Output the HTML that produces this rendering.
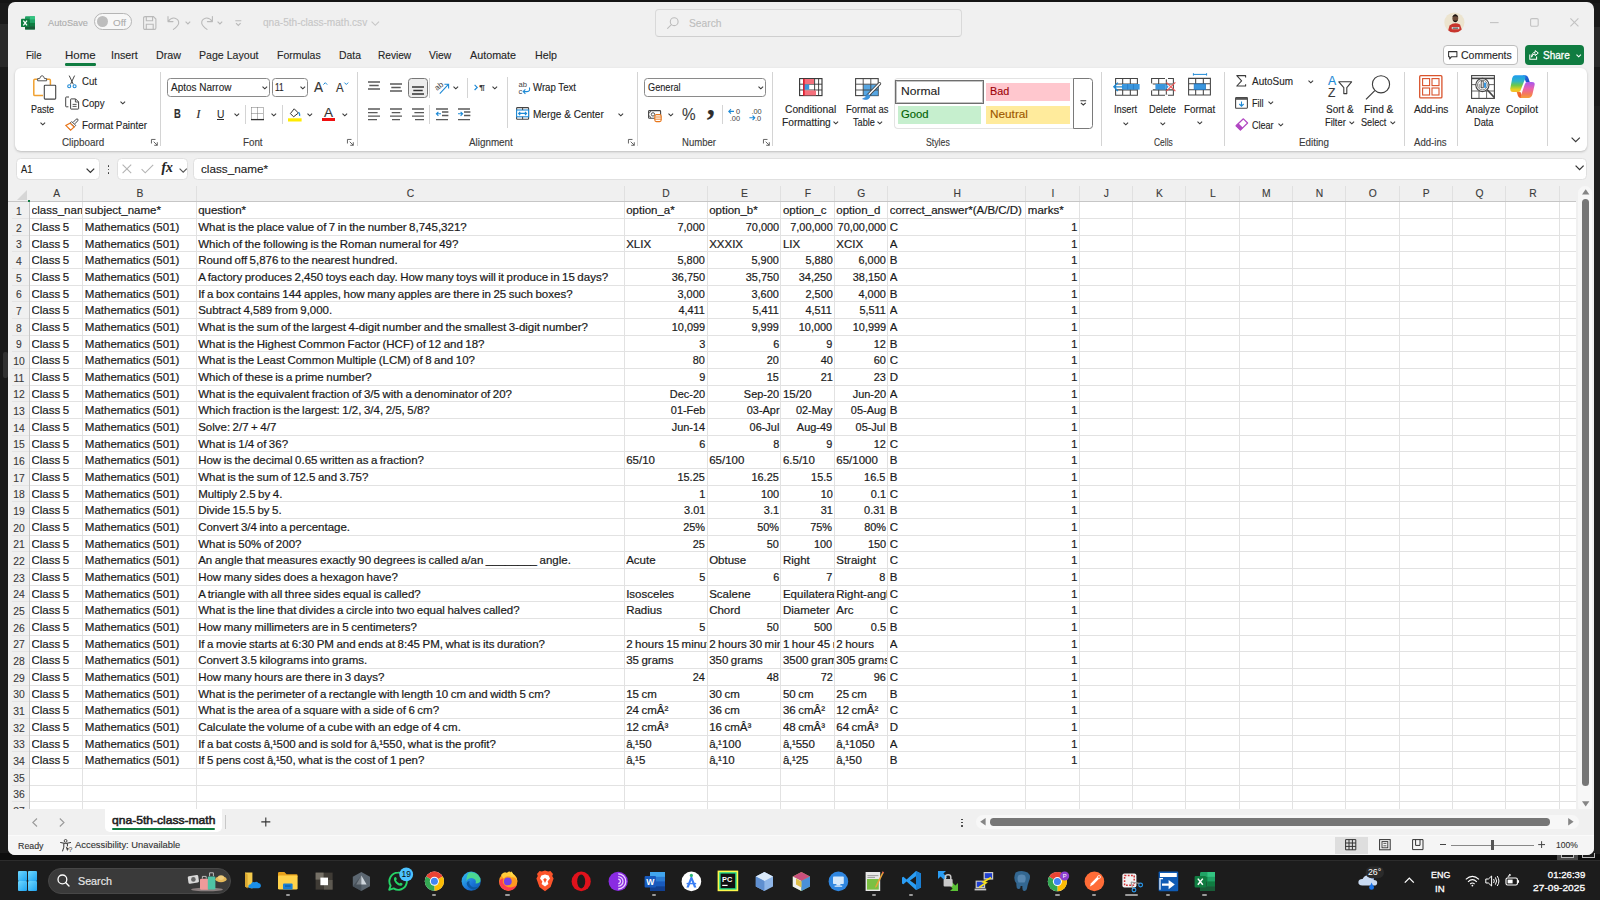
<!DOCTYPE html>
<html lang="en"><head><meta charset="utf-8"><title>qna-5th-class-math.csv - Excel</title>
<style>
html,body{margin:0;padding:0;}
body{width:1600px;height:900px;overflow:hidden;background:#1f1f1f;position:relative;font-family:"Liberation Sans",sans-serif;}
.a{position:absolute;box-sizing:border-box;}
.t{position:absolute;white-space:nowrap;font-family:"Liberation Sans",sans-serif;-webkit-text-stroke:0.12px;}
svg{overflow:visible;}
.c{position:absolute;height:15px;line-height:15px;font-size:11.5px;color:#1a1a1a;white-space:nowrap;overflow:hidden;word-spacing:-0.7px;-webkit-text-stroke:0.2px #1a1a1a;}

</style></head><body>
<div class="a" style="left:0.00px;top:0.00px;width:1600.00px;height:900.00px;background:#1a1a1a;"></div>
<div class="a" style="left:0.00px;top:0.00px;width:1600.00px;height:3.00px;background:#151515;"></div>
<div class="a" style="left:0.00px;top:853.00px;width:1600.00px;height:8.00px;background:#0e0e0e;"></div>
<div class="a" style="left:0.00px;top:23.50px;width:8.00px;height:43.50px;background:#292929;"></div>
<div class="a" style="left:2.50px;top:352.00px;width:5.00px;height:26.00px;background:#323232;border-radius:2px;"></div>
<div class="a" style="left:1594.00px;top:27.00px;width:6.00px;height:40.00px;background:#292929;"></div>
<div class="a" style="left:1594.00px;top:106.00px;width:6.00px;height:748.00px;background:#1f1f1f;"></div>
<div class="a" style="left:1557.00px;top:853.00px;width:21.00px;height:8.00px;background:#4a4a4a;"></div>
<div class="a" style="left:1561.00px;top:853.00px;width:13.00px;height:5.00px;background:#1b1b1b;border:1px solid #bbb;border-top:none;"></div>
<div class="a" style="left:1582.00px;top:853.00px;width:13.00px;height:4.50px;background:#1b1b1b;border:1px solid #bbb;border-top:none;"></div>
<div class="a" style="left:7.70px;top:2.20px;width:1586.80px;height:852.50px;background:#f0f0f0;border-radius:7px;"></div>
<svg class="a" style="left:21.00px;top:15.50px;" width="14.5" height="14" viewBox="0 0 14.5 14" fill="none">
<rect x="4" y="0.3" width="10" height="13.2" rx="1" fill="#21a366"/>
<rect x="9" y="0.3" width="5" height="3.4" fill="#33c481"/>
<rect x="4" y="3.6" width="5" height="3.3" fill="#107c41"/>
<rect x="9" y="3.6" width="5" height="3.3" fill="#21a366"/>
<rect x="4" y="6.9" width="5" height="3.3" fill="#185c37"/>
<rect x="9" y="6.9" width="5" height="3.3" fill="#107c41"/>
<rect x="4" y="10.2" width="10" height="3.3" fill="#185c37"/>
<rect x="0" y="2.8" width="8.3" height="8.3" rx="0.9" fill="#107c41"/>
<path d="M2.3 4.6L6 9.4M6 4.6L2.3 9.4" stroke="#fff" stroke-width="1.25"/>
</svg>
<div class="t " style="left:48.20px;top:16.00px;font-size:9.4px;line-height:13px;color:#adadad;transform:scaleX(0.9813);transform-origin:left center;">AutoSave</div>
<div class="a" style="left:94.00px;top:13.40px;width:37.60px;height:16.20px;background:#f7f7f7;border:1px solid #b5b5b5;border-radius:9px;"></div>
<div class="a" style="left:97.00px;top:16.00px;width:11.40px;height:11.40px;background:#bdbdbd;border-radius:50%;"></div>
<div class="t " style="left:113.00px;top:16.00px;font-size:9.4px;line-height:13px;color:#adadad;transform:scaleX(1.0514);transform-origin:left center;">Off</div>
<svg class="a" style="left:143.00px;top:15.50px;" width="13.5" height="14" viewBox="0 0 13.5 14" fill="none"><path d="M0.6 2.1Q0.6 0.6 2.1 0.6H10.4L12.9 3.1V11.9Q12.9 13.4 11.4 13.4H2.1Q0.6 13.4 0.6 11.9Z" stroke="#b9b9b9" stroke-width="1.1"/><path d="M3.3 0.8V4.8H9.6V0.8M3.3 13.2V8.3H10.2V13.2" stroke="#b9b9b9" stroke-width="1.1"/></svg>
<svg class="a" style="left:167.00px;top:16.00px;" width="14" height="14" viewBox="0 0 14 14" fill="none"><path d="M1 0.6V5.6H6M1.2 5.4Q4 1.4 8 2.2Q12.3 3.4 11.6 7.6Q11 10 6.4 13.4" stroke="#b9b9b9" stroke-width="1.1" stroke-linecap="round" stroke-linejoin="round"/></svg>
<svg class="a" style="left:185.00px;top:20.50px;" width="6" height="4" viewBox="0 0 6 4" fill="none"><path d="M0.6 0.6L2.9 2.9L5.2 0.6" stroke="#b9b9b9" stroke-width="1.1"/></svg>
<svg class="a" style="left:199.50px;top:16.00px;" width="14" height="14" viewBox="0 0 14 14" fill="none"><path d="M12.4 0.6V5.6H7.4M12.2 5.4Q9.4 1.4 5.4 2.2Q1.1 3.4 1.8 7.6Q2.4 10 7 13.4" stroke="#b9b9b9" stroke-width="1.1" stroke-linecap="round" stroke-linejoin="round"/></svg>
<svg class="a" style="left:217.00px;top:20.50px;" width="6" height="4" viewBox="0 0 6 4" fill="none"><path d="M0.6 0.6L2.9 2.9L5.2 0.6" stroke="#b9b9b9" stroke-width="1.1"/></svg>
<svg class="a" style="left:234.50px;top:19.50px;" width="7" height="6" viewBox="0 0 7 6" fill="none"><path d="M0.3 0.7H6.3M1 3.2L3.3 5.4L5.6 3.2" stroke="#b9b9b9" stroke-width="1.1"/></svg>
<div class="t " style="left:262.80px;top:16.00px;font-size:10.3px;line-height:13px;color:#c6c6c6;transform:scaleX(0.9787);transform-origin:left center;">qna-5th-class-math.csv</div>
<svg class="a" style="left:371.00px;top:20.50px;" width="9" height="6" viewBox="0 0 9 6" fill="none"><path d="M0.6 0.6L4.3 4.3L8 0.6" stroke="#c6c6c6" stroke-width="1.1"/></svg>
<div class="a" style="left:654.60px;top:8.60px;width:307.00px;height:28.00px;background:#f1f1f1;border:1px solid #d9d9d9;border-bottom-color:#cfcfcf;border-radius:4px;"></div>
<svg class="a" style="left:666.50px;top:16.50px;" width="12" height="12" viewBox="0 0 12 12" fill="none"><circle cx="7.2" cy="4.7" r="3.9" stroke="#bdbdbd" stroke-width="1.1"/><path d="M4.4 7.6L0.6 11.4" stroke="#bdbdbd" stroke-width="1.1" stroke-linecap="round"/></svg>
<div class="t " style="left:689.40px;top:17.00px;font-size:10.4px;line-height:13px;color:#bdbdbd;transform:scaleX(0.9863);transform-origin:left center;">Search</div>
<svg class="a" style="left:1444.00px;top:12.00px;" width="21" height="21" viewBox="0 0 21 21" fill="none"><defs><clipPath id="av"><circle cx="10.4" cy="10.5" r="10.1"/></clipPath></defs>
<g clip-path="url(#av)"><rect width="21" height="21" fill="#ece4cf"/>
<path d="M3.5 21L5.5 13.5Q10.5 9.5 16 12.5L19 21Z" fill="#c8352e"/>
<ellipse cx="11.3" cy="6.3" rx="2.9" ry="3.8" fill="#6b4a38"/>
<path d="M8.2 5.2Q11.3 -0.5 14.4 5.2Q11.3 3.2 8.2 5.2Z" fill="#1d1714"/>
<path d="M8.8 8Q11.3 12.4 13.8 8Q11.3 9.6 8.8 8Z" fill="#1d1714"/>
<rect x="7.8" y="15" width="7.5" height="2.2" fill="#e9e9e9"/><rect x="8.6" y="15.6" width="5.6" height="1" fill="#333"/></g></svg>
<svg class="a" style="left:1489.60px;top:21.80px;" width="9" height="2" viewBox="0 0 9 2" fill="none"><path d="M0 0.6H8.6" stroke="#c2c2c2" stroke-width="1.1"/></svg>
<svg class="a" style="left:1529.80px;top:18.30px;" width="9" height="9" viewBox="0 0 9 9" fill="none"><rect x="0.6" y="0.6" width="7.6" height="7.6" rx="1.2" stroke="#c2c2c2" stroke-width="1.1"/></svg>
<svg class="a" style="left:1569.80px;top:18.30px;" width="9" height="9" viewBox="0 0 9 9" fill="none"><path d="M0.4 0.4L8.4 8.4M8.4 0.4L0.4 8.4" stroke="#c2c2c2" stroke-width="1.1"/></svg>
<div class="t " style="left:26.30px;top:48.00px;font-size:11.1px;line-height:14px;color:#262626;transform:scaleX(0.8667);transform-origin:left center;">File</div>
<div class="t " style="left:64.60px;top:48.00px;font-size:11.1px;line-height:14px;color:#262626;transform:scaleX(1.0335);transform-origin:left center;">Home</div>
<div class="t " style="left:111.40px;top:48.00px;font-size:11.1px;line-height:14px;color:#262626;transform:scaleX(0.9655);transform-origin:left center;">Insert</div>
<div class="t " style="left:156.00px;top:48.00px;font-size:11.1px;line-height:14px;color:#262626;transform:scaleX(0.9652);transform-origin:left center;">Draw</div>
<div class="t " style="left:199.00px;top:48.00px;font-size:11.1px;line-height:14px;color:#262626;transform:scaleX(0.9546);transform-origin:left center;">Page Layout</div>
<div class="t " style="left:277.00px;top:48.00px;font-size:11.1px;line-height:14px;color:#262626;transform:scaleX(0.9447);transform-origin:left center;">Formulas</div>
<div class="t " style="left:338.60px;top:48.00px;font-size:11.1px;line-height:14px;color:#262626;transform:scaleX(0.9384);transform-origin:left center;">Data</div>
<div class="t " style="left:378.40px;top:48.00px;font-size:11.1px;line-height:14px;color:#262626;transform:scaleX(0.9122);transform-origin:left center;">Review</div>
<div class="t " style="left:428.80px;top:48.00px;font-size:11.1px;line-height:14px;color:#262626;transform:scaleX(0.9305);transform-origin:left center;">View</div>
<div class="t " style="left:469.60px;top:48.00px;font-size:11.1px;line-height:14px;color:#262626;transform:scaleX(0.9704);transform-origin:left center;">Automate</div>
<div class="t " style="left:534.60px;top:48.00px;font-size:11.1px;line-height:14px;color:#262626;transform:scaleX(0.9637);transform-origin:left center;">Help</div>
<div class="a" style="left:64.50px;top:63.40px;width:31.00px;height:2.40px;background:#107c41;border-radius:1.2px;"></div>
<div class="a" style="left:1443.30px;top:45.30px;width:74.80px;height:19.60px;background:#fff;border:1px solid #bdbdbd;border-radius:4px;"></div>
<svg class="a" style="left:1448.00px;top:50.80px;" width="10" height="9" viewBox="0 0 10 9" fill="none"><path d="M0.6 0.6H8.9V5.7H3.6L1.7 7.9V5.7H0.6Z" stroke="#333" stroke-width="1.05" stroke-linejoin="round"/></svg>
<div class="t " style="left:1461.20px;top:49.00px;font-size:10.4px;line-height:13px;color:#262626;transform:scaleX(1.0104);transform-origin:left center;">Comments</div>
<div class="a" style="left:1525.00px;top:45.30px;width:59.20px;height:19.60px;background:#107c41;border-radius:4px;"></div>
<svg class="a" style="left:1529.00px;top:50.00px;" width="10" height="10" viewBox="0 0 10 10" fill="none"><path d="M0.8 4.6V9.2H7.6V6.6" stroke="#fff" stroke-width="1.05"/><path d="M2.6 7.2Q3 4 6.2 3.8V5.6L9.3 3L6.2 0.6V2.2Q2.6 2.6 2.6 7.2Z" stroke="#fff" stroke-width="1" stroke-linejoin="round"/></svg>
<div class="t " style="left:1542.80px;top:48.00px;font-size:10.6px;line-height:14px;color:#fff;transform:scaleX(0.9475);transform-origin:left center;-webkit-text-stroke:0.3px #fff;">Share</div>
<svg class="a" style="left:1575.50px;top:53.50px;" width="6" height="4" viewBox="0 0 6 4" fill="none"><path d="M0.5 0.6L2.7 2.8L4.9 0.6" stroke="#fff" stroke-width="1.1"/></svg>
<div class="a" style="left:15.00px;top:68.00px;width:1572.30px;height:82.80px;background:#fff;border-radius:6px;box-shadow:0 1px 2.5px rgba(0,0,0,0.22);"></div>
<svg class="a" style="left:33.00px;top:74.50px;" width="24" height="26" viewBox="0 0 24 26" fill="none">
<path d="M4.5 4.3H1.9Q0.8 4.3 0.8 5.4V19.5Q0.8 20.6 1.9 20.6H10" stroke="#f0a030" stroke-width="1.5"/>
<path d="M13.5 4.3H16.3Q17.4 4.3 17.4 5.4V10" stroke="#f0a030" stroke-width="1.5"/>
<path d="M4.6 5.8V3.6H6.7Q7.4 0.7 9.1 0.7Q10.8 0.7 11.5 3.6H13.6V5.8Z" stroke="#555" stroke-width="1" fill="#fff"/>
<rect x="11.3" y="10.3" width="11.4" height="13.8" rx="0.8" stroke="#444" stroke-width="1.1" fill="#fff"/>
</svg>
<div class="t " style="left:31.20px;top:103.00px;font-size:10.3px;line-height:13px;color:#242424;transform:scaleX(0.8733);transform-origin:left center;">Paste</div>
<svg class="a" style="left:39.60px;top:121.50px;" width="5.6" height="4" viewBox="0 0 5.6 4" fill="none"><path d="M0.5 0.6L2.80 2.80L5.1 0.6" stroke="#3b3b3b" stroke-width="1.15"/></svg>
<svg class="a" style="left:66.50px;top:74.50px;" width="10" height="14" viewBox="0 0 10 14" fill="none"><path d="M2.2 0.6L6.3 9.3M7.6 0.6L3.5 9.3" stroke="#444" stroke-width="1"/>
<circle cx="2.2" cy="11.3" r="1.5" stroke="#1e8ad6" stroke-width="1.1"/><circle cx="7.6" cy="11.3" r="1.5" stroke="#1e8ad6" stroke-width="1.1"/></svg>
<div class="t " style="left:82.00px;top:75.00px;font-size:10.3px;line-height:13px;color:#242424;transform:scaleX(0.9359);transform-origin:left center;">Cut</div>
<svg class="a" style="left:64.50px;top:95.50px;" width="15" height="14" viewBox="0 0 15 14" fill="none"><path d="M4 1H1.2Q0.7 1 0.7 1.5V10.3Q0.7 10.8 1.2 10.8H3.4" stroke="#444" stroke-width="1"/>
<path d="M5.6 3.4Q5.6 2.9 6.1 2.9H10.6L13.6 5.9V12.6Q13.6 13.1 13.1 13.1H6.1Q5.6 13.1 5.6 12.6Z" stroke="#444" stroke-width="1" fill="#fff"/>
<path d="M10.4 3V6H13.4M7.6 8.4H11.6M7.6 10.4H11.6" stroke="#444" stroke-width="0.9"/></svg>
<div class="t " style="left:82.00px;top:97.00px;font-size:10.3px;line-height:13px;color:#242424;transform:scaleX(0.9399);transform-origin:left center;">Copy</div>
<svg class="a" style="left:119.60px;top:101.40px;" width="5.6" height="4" viewBox="0 0 5.6 4" fill="none"><path d="M0.5 0.6L2.80 2.80L5.1 0.6" stroke="#3b3b3b" stroke-width="1.15"/></svg>
<svg class="a" style="left:65.00px;top:117.50px;" width="15" height="13" viewBox="0 0 15 13" fill="none"><path d="M8.2 4.3L11.2 1.2Q12 0.5 12.8 1.2Q13.4 2 12.7 2.8L9.9 5.8" stroke="#444" stroke-width="1"/>
<path d="M6.6 3.6L10.8 7.4L9.4 8.8L5.2 5Z" stroke="#444" stroke-width="0.9" fill="#fff"/>
<path d="M5 5.2L9.2 9L5.6 12.2L0.8 7.4Z" stroke="#e8761a" stroke-width="1.1" fill="#fff"/>
<path d="M3 9.6L6 11.8L5.5 12.2L1.5 8.3Z" fill="#e8761a"/></svg>
<div class="t " style="left:82.00px;top:119.00px;font-size:10.3px;line-height:13px;color:#242424;transform:scaleX(0.9543);transform-origin:left center;">Format Painter</div>
<div class="t " style="left:62.00px;top:136.00px;font-size:10.1px;line-height:13px;color:#3a3a3a;transform:scaleX(0.9762);transform-origin:left center;">Clipboard</div>
<svg class="a" style="left:151.00px;top:139.00px;" width="7.2" height="7.2" viewBox="0 0 8 8" fill="none"><path d="M0.5 5V0.5H5" stroke="#555" stroke-width="1"/><path d="M3 3L7 7M7 3.6V7H3.6" stroke="#555" stroke-width="1"/></svg>
<div class="a" style="left:160.10px;top:72.00px;width:1.00px;height:74.00px;background:#d4d4d4;"></div>
<div class="a" style="left:167.40px;top:78.00px;width:102.60px;height:19.40px;background:#fff;border:1px solid #8a8a8a;border-radius:3.5px;"></div>
<div class="t " style="left:170.60px;top:81.00px;font-size:10.3px;line-height:13px;color:#242424;transform:scaleX(0.9681);transform-origin:left center;">Aptos Narrow</div>
<svg class="a" style="left:261.60px;top:86.30px;" width="5.6" height="4" viewBox="0 0 5.6 4" fill="none"><path d="M0.5 0.6L2.80 2.80L5.1 0.6" stroke="#3b3b3b" stroke-width="1.15"/></svg>
<div class="a" style="left:272.20px;top:78.00px;width:35.40px;height:19.40px;background:#fff;border:1px solid #8a8a8a;border-radius:3.5px;"></div>
<div class="t " style="left:275.00px;top:81.00px;font-size:10.3px;line-height:13px;color:#242424;transform:scaleX(0.8044);transform-origin:left center;">11</div>
<svg class="a" style="left:299.80px;top:86.30px;" width="5.6" height="4" viewBox="0 0 5.6 4" fill="none"><path d="M0.5 0.6L2.80 2.80L5.1 0.6" stroke="#3b3b3b" stroke-width="1.15"/></svg>
<div class="t " style="left:313.60px;top:78.00px;font-size:14.5px;line-height:18px;color:#333;transform:scaleX(0.9305);transform-origin:left center;">A</div>
<svg class="a" style="left:322.50px;top:81.50px;" width="5" height="3" viewBox="0 0 5 3" fill="none"><path d="M0.4 2.6L2.3 0.7L4.2 2.6" stroke="#1e8ad6" stroke-width="1"/></svg>
<div class="t " style="left:336.40px;top:80.00px;font-size:12px;line-height:16px;color:#333;transform:scaleX(0.9495);transform-origin:left center;">A</div>
<svg class="a" style="left:343.60px;top:81.70px;" width="5" height="3" viewBox="0 0 5 3" fill="none"><path d="M0.4 0.6L2.3 2.5L4.2 0.6" stroke="#1e8ad6" stroke-width="1"/></svg>
<div class="t " style="left:174.20px;top:106.00px;font-size:12.4px;line-height:16px;color:#2d2d2d;font-weight:700;transform:scaleX(0.7593);transform-origin:left center;">B</div>
<div class="t" style="left:196.2px;top:106.2px;font-size:12.6px;line-height:16px;color:#2d2d2d;font-family:'Liberation Serif',serif;font-style:italic;">I</div>
<div class="t " style="left:216.60px;top:107.00px;font-size:11.6px;line-height:14px;color:#2d2d2d;transform:scaleX(0.8833);transform-origin:left center;">U</div>
<div class="a" style="left:216.60px;top:119.20px;width:7.60px;height:1.00px;background:#2d2d2d;"></div>
<svg class="a" style="left:233.80px;top:113.20px;" width="5.6" height="4" viewBox="0 0 5.6 4" fill="none"><path d="M0.5 0.6L2.80 2.80L5.1 0.6" stroke="#3b3b3b" stroke-width="1.15"/></svg>
<div class="a" style="left:245.10px;top:105.00px;width:1.00px;height:18.60px;background:#d4d4d4;"></div>
<svg class="a" style="left:251.00px;top:107.00px;" width="14" height="14" viewBox="0 0 14 14" fill="none"><path d="M0.5 0.5H12.5M0.5 0.5V12.5M12.5 0.5V12.5M6.5 0.5V12.5M0.5 6.5H12.5" stroke="#777" stroke-width="1" stroke-dasharray="1 1"/>
<path d="M0 12.6H13" stroke="#333" stroke-width="1.3"/></svg>
<svg class="a" style="left:270.60px;top:113.20px;" width="5.6" height="4" viewBox="0 0 5.6 4" fill="none"><path d="M0.5 0.6L2.80 2.80L5.1 0.6" stroke="#3b3b3b" stroke-width="1.15"/></svg>
<div class="a" style="left:281.70px;top:105.00px;width:1.00px;height:18.60px;background:#d4d4d4;"></div>
<svg class="a" style="left:287.50px;top:107.50px;" width="14" height="14" viewBox="0 0 14 14" fill="none"><path d="M6.2 0.8L10.4 5L5.6 8.8L2.4 5.6Z" stroke="#333" stroke-width="1" fill="#fff" stroke-linejoin="round"/>
<path d="M10.6 4.2Q12 6 11.6 8" stroke="#1e8ad6" stroke-width="1.3"/>
<rect x="0" y="10.3" width="13.6" height="3.2" fill="#ffeb00"/></svg>
<svg class="a" style="left:307.40px;top:113.20px;" width="5.6" height="4" viewBox="0 0 5.6 4" fill="none"><path d="M0.5 0.6L2.80 2.80L5.1 0.6" stroke="#3b3b3b" stroke-width="1.15"/></svg>
<div class="t " style="left:323.80px;top:105.00px;font-size:12.6px;line-height:16px;color:#333;transform:scaleX(1.0708);transform-origin:left center;">A</div>
<div class="a" style="left:321.80px;top:117.80px;width:13.40px;height:3.20px;background:#f01010;"></div>
<svg class="a" style="left:341.60px;top:113.20px;" width="5.6" height="4" viewBox="0 0 5.6 4" fill="none"><path d="M0.5 0.6L2.80 2.80L5.1 0.6" stroke="#3b3b3b" stroke-width="1.15"/></svg>
<div class="t " style="left:243.00px;top:136.00px;font-size:10.1px;line-height:13px;color:#3a3a3a;transform:scaleX(0.9699);transform-origin:left center;">Font</div>
<svg class="a" style="left:347.40px;top:139.00px;" width="7.2" height="7.2" viewBox="0 0 8 8" fill="none"><path d="M0.5 5V0.5H5" stroke="#555" stroke-width="1"/><path d="M3 3L7 7M7 3.6V7H3.6" stroke="#555" stroke-width="1"/></svg>
<div class="a" style="left:357.10px;top:72.00px;width:1.00px;height:74.00px;background:#d4d4d4;"></div>
<svg class="a" style="left:368.00px;top:79.50px;" width="12" height="11.0" viewBox="0 0 12 11.0" fill="none"><path d="M0.00 2.00h12.00M1.30 5.50h9.40M0.00 9.00h12.00" stroke="#5a5a5a" stroke-width="1.35"/></svg>
<svg class="a" style="left:390.00px;top:81.50px;" width="12" height="11.0" viewBox="0 0 12 11.0" fill="none"><path d="M0.00 2.00h12.00M1.30 5.50h9.40M0.00 9.00h12.00" stroke="#5a5a5a" stroke-width="1.35"/></svg>
<div class="a" style="left:408.00px;top:78.00px;width:19.60px;height:19.50px;background:#ececec;border:1px solid #777;border-radius:3.5px;"></div>
<svg class="a" style="left:412.00px;top:84.80px;" width="12" height="11.0" viewBox="0 0 12 11.0" fill="none"><path d="M0.00 2.00h12.00M1.30 5.50h9.40M0.00 9.00h12.00" stroke="#333" stroke-width="1.35"/></svg>
<div class="a" style="left:429.30px;top:78.00px;width:1.00px;height:19.50px;background:#d4d4d4;"></div>
<svg class="a" style="left:435.00px;top:81.00px;" width="15" height="14" viewBox="0 0 15 14" fill="none"><text x="0" y="8" font-size="8" font-family="Liberation Sans, sans-serif" fill="#444" transform="rotate(-38 4 6)">ab</text>
<path d="M4.8 12.6L13.4 3.4M9.4 3.2H13.6V7.4" stroke="#1e8ad6" stroke-width="1.1"/></svg>
<svg class="a" style="left:453.40px;top:86.30px;" width="5.6" height="4" viewBox="0 0 5.6 4" fill="none"><path d="M0.5 0.6L2.80 2.80L5.1 0.6" stroke="#3b3b3b" stroke-width="1.15"/></svg>
<div class="a" style="left:467.10px;top:78.00px;width:1.00px;height:19.50px;background:#d4d4d4;"></div>
<svg class="a" style="left:473.60px;top:84.00px;" width="12" height="8" viewBox="0 0 12 8" fill="none"><path d="M0.6 0.8L3.2 3.4L0.6 6" stroke="#1e8ad6" stroke-width="1.2"/></svg>
<div class="t " style="left:478.60px;top:82.00px;font-size:8px;line-height:11px;color:#333;transform:scaleX(1.3962);transform-origin:left center;">¶</div>
<svg class="a" style="left:492.40px;top:86.30px;" width="5.6" height="4" viewBox="0 0 5.6 4" fill="none"><path d="M0.5 0.6L2.80 2.80L5.1 0.6" stroke="#3b3b3b" stroke-width="1.15"/></svg>
<div class="a" style="left:506.90px;top:77.00px;width:1.00px;height:51.00px;background:#d4d4d4;"></div>
<svg class="a" style="left:368.00px;top:106.80px;" width="12" height="14.600000000000009" viewBox="0 0 12 14.600000000000009" fill="none"><path d="M0.00 2.00h12.00M0.00 5.60h9.60M0.00 9.10h12.00M0.00 12.60h9.00" stroke="#5a5a5a" stroke-width="1.35"/></svg>
<svg class="a" style="left:390.00px;top:106.80px;" width="12" height="14.600000000000009" viewBox="0 0 12 14.600000000000009" fill="none"><path d="M0.00 2.00h12.00M1.70 5.60h8.60M0.00 9.10h12.00M2.00 12.60h8.00" stroke="#5a5a5a" stroke-width="1.35"/></svg>
<svg class="a" style="left:412.00px;top:106.80px;" width="12" height="14.600000000000009" viewBox="0 0 12 14.600000000000009" fill="none"><path d="M0.00 2.00h12.00M2.40 5.60h9.60M0.00 9.10h12.00M3.00 12.60h9.00" stroke="#5a5a5a" stroke-width="1.35"/></svg>
<div class="a" style="left:429.30px;top:105.00px;width:1.00px;height:18.60px;background:#d4d4d4;"></div>
<svg class="a" style="left:436.00px;top:106.80px;" width="12" height="14.600000000000009" viewBox="0 0 12 14.600000000000009" fill="none"><path d="M0.00 2.00h12.00M0.00 12.60h12.00" stroke="#5a5a5a" stroke-width="1.35"/></svg>
<svg class="a" style="left:441.60px;top:110.40px;" width="12" height="7.5" viewBox="0 0 12 7.5" fill="none"><path d="M0.00 2.00h6.40M0.00 5.50h6.40" stroke="#5a5a5a" stroke-width="1.35"/></svg>
<svg class="a" style="left:436.00px;top:111.40px;" width="6" height="6" viewBox="0 0 6 6" fill="none"><path d="M5 2.8H0.6M2.4 0.8L0.4 2.8L2.4 4.8" stroke="#1e8ad6" stroke-width="1.1"/></svg>
<svg class="a" style="left:458.00px;top:106.80px;" width="12" height="14.600000000000009" viewBox="0 0 12 14.600000000000009" fill="none"><path d="M0.00 2.00h12.00M0.00 12.60h12.00" stroke="#5a5a5a" stroke-width="1.35"/></svg>
<svg class="a" style="left:463.60px;top:110.40px;" width="12" height="7.5" viewBox="0 0 12 7.5" fill="none"><path d="M0.00 2.00h6.40M0.00 5.50h6.40" stroke="#5a5a5a" stroke-width="1.35"/></svg>
<svg class="a" style="left:458.00px;top:111.40px;" width="6" height="6" viewBox="0 0 6 6" fill="none"><path d="M0 2.8H4.4M2.6 0.8L4.6 2.8L2.6 4.8" stroke="#1e8ad6" stroke-width="1.1"/></svg>
<svg class="a" style="left:517.50px;top:81.00px;" width="13" height="14" viewBox="0 0 13 14" fill="none"><text x="0.6" y="6.2" font-size="7.6" font-family="Liberation Sans, sans-serif" fill="#444">ab</text>
<text x="0.6" y="12.8" font-size="7.6" font-family="Liberation Sans, sans-serif" fill="#444">c</text>
<path d="M11.4 6.5Q12.6 10.6 9 10.6H5.4M7.4 8.4L5.2 10.6L7.4 12.8" stroke="#1e8ad6" stroke-width="1.1"/></svg>
<div class="t " style="left:533.00px;top:81.00px;font-size:10.3px;line-height:13px;color:#242424;transform:scaleX(0.9351);transform-origin:left center;">Wrap Text</div>
<svg class="a" style="left:516.00px;top:107.30px;" width="13.4" height="13" viewBox="0 0 13.4 13" fill="none"><rect x="0.6" y="0.6" width="12" height="11.6" rx="0.8" stroke="#444" stroke-width="1.1"/>
<rect x="0.6" y="3" width="12" height="6.8" fill="#fff" stroke="#1e8ad6" stroke-width="1.1"/>
<path d="M6.6 0.6V3M6.6 9.8V12.2" stroke="#444" stroke-width="1"/>
<path d="M2.6 6.4H10.6M4.2 4.8L2.6 6.4L4.2 8M9 4.8L10.6 6.4L9 8" stroke="#1e8ad6" stroke-width="1.1"/></svg>
<div class="t " style="left:533.00px;top:108.00px;font-size:10.3px;line-height:13px;color:#242424;transform:scaleX(0.9739);transform-origin:left center;">Merge &amp; Center</div>
<svg class="a" style="left:618.00px;top:113.20px;" width="5.6" height="4" viewBox="0 0 5.6 4" fill="none"><path d="M0.5 0.6L2.80 2.80L5.1 0.6" stroke="#3b3b3b" stroke-width="1.15"/></svg>
<div class="t " style="left:468.80px;top:136.00px;font-size:10.1px;line-height:13px;color:#3a3a3a;transform:scaleX(0.9753);transform-origin:left center;">Alignment</div>
<svg class="a" style="left:628.00px;top:139.00px;" width="7.2" height="7.2" viewBox="0 0 8 8" fill="none"><path d="M0.5 5V0.5H5" stroke="#555" stroke-width="1"/><path d="M3 3L7 7M7 3.6V7H3.6" stroke="#555" stroke-width="1"/></svg>
<div class="a" style="left:637.10px;top:72.00px;width:1.00px;height:74.00px;background:#d4d4d4;"></div>
<div class="a" style="left:644.40px;top:78.00px;width:121.40px;height:19.40px;background:#fff;border:1px solid #8a8a8a;border-radius:3.5px;"></div>
<div class="t " style="left:647.60px;top:81.00px;font-size:10.3px;line-height:13px;color:#242424;transform:scaleX(0.8897);transform-origin:left center;">General</div>
<svg class="a" style="left:757.80px;top:86.30px;" width="5.6" height="4" viewBox="0 0 5.6 4" fill="none"><path d="M0.5 0.6L2.80 2.80L5.1 0.6" stroke="#3b3b3b" stroke-width="1.15"/></svg>
<svg class="a" style="left:647.50px;top:109.50px;" width="14" height="12" viewBox="0 0 14 12" fill="none"><rect x="0.6" y="0.6" width="12" height="7.6" rx="0.8" stroke="#444" stroke-width="1.1"/>
<circle cx="5" cy="4.4" r="1.7" stroke="#444" stroke-width="0.9"/><path d="M0.8 3Q2.6 2.8 2.8 0.8M0.8 5.8Q2.6 6 2.8 8" stroke="#444" stroke-width="0.8"/>
<rect x="6.8" y="4.6" width="6.4" height="7" rx="1.6" fill="#fff" stroke="#e8761a" stroke-width="1.1"/>
<path d="M6.8 7H13.2M6.8 9.2H13.2" stroke="#e8761a" stroke-width="0.9"/></svg>
<svg class="a" style="left:667.60px;top:113.20px;" width="5.6" height="4" viewBox="0 0 5.6 4" fill="none"><path d="M0.5 0.6L2.80 2.80L5.1 0.6" stroke="#3b3b3b" stroke-width="1.15"/></svg>
<div class="t " style="left:681.60px;top:105.00px;font-size:16px;line-height:19px;color:#3b3b3b;transform:scaleX(0.9559);transform-origin:left center;">%</div>
<div class="t" style="left:705.2px;top:103.6px;font-size:32px;line-height:33px;color:#2d2d2d;font-family:'Liberation Serif',serif;font-weight:700;">’</div>
<div class="a" style="left:721.70px;top:105.00px;width:1.00px;height:18.60px;background:#d4d4d4;"></div>
<svg class="a" style="left:728.00px;top:107.50px;" width="14" height="14" viewBox="0 0 14 14" fill="none"><path d="M0.8 3.4H6M3 1.2L0.8 3.4L3 5.6" stroke="#1e8ad6" stroke-width="1.1"/>
<text x="8" y="6.4" font-size="7.4" font-family="Liberation Sans, sans-serif" fill="#444">0</text>
<text x="1.8" y="13" font-size="7.4" font-family="Liberation Sans, sans-serif" fill="#444">.00</text></svg>
<svg class="a" style="left:749.00px;top:107.50px;" width="14" height="14" viewBox="0 0 14 14" fill="none"><text x="2.4" y="6.4" font-size="7.4" font-family="Liberation Sans, sans-serif" fill="#444">.00</text>
<path d="M0.4 9.8H5.8M3.6 7.6L5.8 9.8L3.6 12" stroke="#1e8ad6" stroke-width="1.1"/>
<text x="6" y="13" font-size="7.4" font-family="Liberation Sans, sans-serif" fill="#444">.0</text></svg>
<div class="t " style="left:681.60px;top:136.00px;font-size:10.1px;line-height:13px;color:#3a3a3a;transform:scaleX(0.9466);transform-origin:left center;">Number</div>
<svg class="a" style="left:763.00px;top:139.00px;" width="7.2" height="7.2" viewBox="0 0 8 8" fill="none"><path d="M0.5 5V0.5H5" stroke="#555" stroke-width="1"/><path d="M3 3L7 7M7 3.6V7H3.6" stroke="#555" stroke-width="1"/></svg>
<div class="a" style="left:772.10px;top:72.00px;width:1.00px;height:74.00px;background:#d4d4d4;"></div>
<svg class="a" style="left:798.60px;top:77.80px;" width="24" height="18.4" viewBox="0 0 24 18.4" fill="none"><rect x="0.6" y="0.6" width="22.4" height="17" fill="#fff" stroke="#333" stroke-width="1.1"/>
<path d="M4.6 0.6V17.6M15.6 0.6V17.6M19.6 0.6V17.6M0.6 6.2H23M0.6 12H23" stroke="#333" stroke-width="0.9"/>
<rect x="4.6" y="1" width="10.4" height="5" fill="#f4707c"/><rect x="4.6" y="6.6" width="5.6" height="5" fill="#3a96dd"/>
<rect x="4.6" y="12.4" width="12.4" height="5" fill="#f4707c"/><rect x="4.2" y="0.8" width="1.4" height="16.8" fill="#e81123"/></svg>
<div class="t " style="left:784.80px;top:103.00px;font-size:10.3px;line-height:13px;color:#242424;transform:scaleX(0.9936);transform-origin:left center;">Conditional</div>
<div class="t " style="left:781.60px;top:116.00px;font-size:10.3px;line-height:13px;color:#242424;transform:scaleX(0.9914);transform-origin:left center;">Formatting</div>
<svg class="a" style="left:832.80px;top:120.60px;" width="5.6" height="4" viewBox="0 0 5.6 4" fill="none"><path d="M0.5 0.6L2.80 2.80L5.1 0.6" stroke="#3b3b3b" stroke-width="1.15"/></svg>
<svg class="a" style="left:855.00px;top:77.80px;" width="26" height="22" viewBox="0 0 26 22" fill="none"><rect x="0.6" y="0.6" width="22.6" height="17" fill="#fff" stroke="#444" stroke-width="1.1"/>
<rect x="8.2" y="6.4" width="15" height="11.2" fill="#3a96dd" opacity="0.85"/>
<path d="M8.2 0.6V17.6M15.8 0.6V17.6M0.6 6.2H23.2M0.6 12H23.2" stroke="#444" stroke-width="0.9"/>
<path d="M24.6 5.6L13 17.4" stroke="#444" stroke-width="3.2" stroke-linecap="round"/><path d="M24.6 5.6L13.4 17" stroke="#fff" stroke-width="1.4" stroke-linecap="round"/>
<path d="M7.6 20.8Q11 20.2 11.4 17Q13.4 15.6 14.6 17.4Q15.4 20.6 11.6 21.4Q9.4 21.8 7.6 20.8Z" fill="#3a96dd" stroke="#2b7cd3" stroke-width="0.6"/></svg>
<div class="t " style="left:845.60px;top:103.00px;font-size:10.3px;line-height:13px;color:#242424;transform:scaleX(0.9147);transform-origin:left center;">Format as</div>
<div class="t " style="left:852.60px;top:116.00px;font-size:10.3px;line-height:13px;color:#242424;transform:scaleX(0.8854);transform-origin:left center;">Table</div>
<svg class="a" style="left:877.40px;top:120.60px;" width="5.6" height="4" viewBox="0 0 5.6 4" fill="none"><path d="M0.5 0.6L2.80 2.80L5.1 0.6" stroke="#3b3b3b" stroke-width="1.15"/></svg>
<div class="a" style="left:894.20px;top:78.20px;width:179.40px;height:50.80px;background:#fff;border:1px solid #e3e3e3;border-right:none;border-radius:4px 0 0 4px;"></div>
<div class="a" style="left:895.20px;top:79.80px;width:89.00px;height:24.00px;background:#fff;border:1.2px solid #6e6e6e;box-shadow:inset 0 0 0 1px #c4c4c4;"></div>
<div class="t " style="left:901.00px;top:84.00px;font-size:11.6px;line-height:14px;color:#1f1f1f;transform:scaleX(1.0433);transform-origin:left center;">Normal</div>
<div class="a" style="left:898.00px;top:106.20px;width:83.00px;height:18.00px;background:#c6efce;"></div>
<div class="t " style="left:901.00px;top:107.00px;font-size:11.6px;line-height:14px;color:#006100;transform:scaleX(0.9727);transform-origin:left center;">Good</div>
<div class="a" style="left:986.20px;top:83.00px;width:83.60px;height:17.80px;background:#ffc7ce;"></div>
<div class="t " style="left:990.00px;top:84.00px;font-size:11.6px;line-height:14px;color:#9c0006;transform:scaleX(0.9303);transform-origin:left center;">Bad</div>
<div class="a" style="left:986.20px;top:106.20px;width:83.60px;height:18.00px;background:#ffeb9c;"></div>
<div class="t " style="left:990.00px;top:107.00px;font-size:11.6px;line-height:14px;color:#9c5700;transform:scaleX(1.0163);transform-origin:left center;">Neutral</div>
<div class="a" style="left:1073.00px;top:77.80px;width:19.60px;height:51.40px;background:#fff;border:1px solid #7a7a7a;border-radius:0 3.5px 3.5px 0;"></div>
<svg class="a" style="left:1079.60px;top:99.60px;" width="7" height="6" viewBox="0 0 7 6" fill="none"><path d="M0.4 0.7H6.2M0.9 2.8L3.3 5L5.7 2.8" stroke="#3b3b3b" stroke-width="1.1"/></svg>
<div class="t " style="left:925.60px;top:136.00px;font-size:10.1px;line-height:13px;color:#3a3a3a;transform:scaleX(0.8653);transform-origin:left center;">Styles</div>
<div class="a" style="left:1101.10px;top:72.00px;width:1.00px;height:74.00px;background:#d4d4d4;"></div>
<svg class="a" style="left:1113.00px;top:77.80px;" width="28" height="18.4" viewBox="0 0 28 18.4" fill="none"><g transform="translate(2,0)"><path d="M0.6 0.6H22.40V17.20H0.6Z M7.67 0.6V17.20 M15.33 0.6V17.20 M0.6 5.93H22.40 M0.6 11.87H22.40" stroke="#444" stroke-width="1.05" fill="#fff"/></g><rect x="9" y="6" width="17.6" height="5.6" fill="#3a96dd"/><path d="M14.6 6V11.6M20.4 6V11.6" stroke="#2478c4" stroke-width="0.8"/>
<path d="M0.8 8.8H10.4M4.8 4.6L0.8 8.8L4.8 13" stroke="#1e8ad6" stroke-width="1.3" fill="none"/></svg>
<div class="t " style="left:1114.40px;top:103.00px;font-size:10.3px;line-height:13px;color:#242424;transform:scaleX(0.9007);transform-origin:left center;">Insert</div>
<svg class="a" style="left:1123.20px;top:121.50px;" width="5.6" height="4" viewBox="0 0 5.6 4" fill="none"><path d="M0.5 0.6L2.80 2.80L5.1 0.6" stroke="#3b3b3b" stroke-width="1.15"/></svg>
<svg class="a" style="left:1151.00px;top:77.80px;" width="26" height="18.4" viewBox="0 0 26 18.4" fill="none"><path d="M0.6 0.6H22.40V17.20H0.6Z M7.67 0.6V17.20 M15.33 0.6V17.20 M0.6 5.93H22.40 M0.6 11.87H22.40" stroke="#444" stroke-width="1.05" fill="#fff"/><rect x="-0.2" y="5.4" width="2" height="7" fill="#fff"/><rect x="14" y="-0.2" width="3" height="1.6" fill="#fff"/><rect x="14" y="16.6" width="3" height="1.6" fill="#fff"/>
<rect x="4.4" y="6" width="10" height="5.6" fill="#3a96dd"/><path d="M14.4 5.4L17.6 8.8L14.4 12.2Z" fill="#3a96dd"/>
<path d="M15.4 4.4L24.4 13.2M24.4 4.4L15.4 13.2" stroke="#f25a5a" stroke-width="1.2"/></svg>
<div class="t " style="left:1149.40px;top:103.00px;font-size:10.3px;line-height:13px;color:#242424;transform:scaleX(0.9002);transform-origin:left center;">Delete</div>
<svg class="a" style="left:1160.20px;top:121.50px;" width="5.6" height="4" viewBox="0 0 5.6 4" fill="none"><path d="M0.5 0.6L2.80 2.80L5.1 0.6" stroke="#3b3b3b" stroke-width="1.15"/></svg>
<svg class="a" style="left:1188.00px;top:73.00px;" width="24" height="23.4" viewBox="0 0 24 23.4" fill="none"><path d="M5.4 1.4H18.6M5.4 0.2V2.6M18.6 0.2V2.6" stroke="#1e8ad6" stroke-width="1"/><g transform="translate(0,4.8)"><path d="M0.6 0.6H22.40V17.20H0.6Z M7.67 0.6V17.20 M15.33 0.6V17.20 M0.6 5.93H22.40 M0.6 11.87H22.40" stroke="#444" stroke-width="1.05" fill="#fff"/><rect x="6.2" y="6.2" width="11.2" height="5.4" fill="#3a96dd" stroke="#2478c4" stroke-width="0.8"/></g></svg>
<div class="t " style="left:1184.40px;top:103.00px;font-size:10.3px;line-height:13px;color:#242424;transform:scaleX(0.9566);transform-origin:left center;">Format</div>
<svg class="a" style="left:1197.00px;top:120.60px;" width="5.6" height="4" viewBox="0 0 5.6 4" fill="none"><path d="M0.5 0.6L2.80 2.80L5.1 0.6" stroke="#3b3b3b" stroke-width="1.15"/></svg>
<div class="t " style="left:1153.80px;top:136.00px;font-size:10.1px;line-height:13px;color:#3a3a3a;transform:scaleX(0.8375);transform-origin:left center;">Cells</div>
<div class="a" style="left:1223.90px;top:72.00px;width:1.00px;height:74.00px;background:#d4d4d4;"></div>
<svg class="a" style="left:1236.00px;top:75.00px;" width="11" height="12" viewBox="0 0 11 12" fill="none"><path d="M9.6 2.4V0.6H0.8L5.6 5.8L0.8 11H9.6V9.2" stroke="#3b3b3b" stroke-width="1.1" stroke-linejoin="round"/></svg>
<div class="t " style="left:1252.00px;top:75.00px;font-size:10.3px;line-height:13px;color:#242424;transform:scaleX(0.9678);transform-origin:left center;">AutoSum</div>
<svg class="a" style="left:1308.00px;top:79.60px;" width="5.6" height="4" viewBox="0 0 5.6 4" fill="none"><path d="M0.5 0.6L2.80 2.80L5.1 0.6" stroke="#3b3b3b" stroke-width="1.15"/></svg>
<svg class="a" style="left:1235.00px;top:96.80px;" width="13.4" height="12" viewBox="0 0 13.4 12" fill="none"><rect x="0.6" y="0.6" width="11.8" height="10.6" rx="0.6" stroke="#444" stroke-width="1.1"/><rect x="0.6" y="0.6" width="11.8" height="2.2" fill="#555"/>
<path d="M6.5 4.4V9M4.3 7L6.5 9.2L8.7 7" stroke="#1e8ad6" stroke-width="1.1"/></svg>
<div class="t " style="left:1252.00px;top:97.00px;font-size:10.3px;line-height:13px;color:#242424;transform:scaleX(0.8817);transform-origin:left center;">Fill</div>
<svg class="a" style="left:1267.60px;top:101.40px;" width="5.6" height="4" viewBox="0 0 5.6 4" fill="none"><path d="M0.5 0.6L2.80 2.80L5.1 0.6" stroke="#3b3b3b" stroke-width="1.15"/></svg>
<svg class="a" style="left:1235.00px;top:117.60px;" width="14" height="13" viewBox="0 0 14 13" fill="none"><path d="M8.4 0.8L12.6 5L5.4 12.2L1 7.8Z" stroke="#b146c2" stroke-width="1.2" stroke-linejoin="round"/><path d="M3.6 5.4L8 9.8L5.4 12.2L1 7.8Z" fill="#b146c2"/></svg>
<div class="t " style="left:1252.00px;top:119.00px;font-size:10.3px;line-height:13px;color:#242424;transform:scaleX(0.8776);transform-origin:left center;">Clear</div>
<svg class="a" style="left:1277.60px;top:123.20px;" width="5.6" height="4" viewBox="0 0 5.6 4" fill="none"><path d="M0.5 0.6L2.80 2.80L5.1 0.6" stroke="#3b3b3b" stroke-width="1.15"/></svg>
<div class="t " style="left:1328.00px;top:73.00px;font-size:12px;line-height:16px;color:#1e8ad6;transform:scaleX(1.0244);transform-origin:left center;">A</div>
<div class="t " style="left:1328.20px;top:85.00px;font-size:12px;line-height:16px;color:#3b3b3b;transform:scaleX(1.0096);transform-origin:left center;">Z</div>
<svg class="a" style="left:1338.00px;top:80.60px;" width="15" height="14" viewBox="0 0 15 14" fill="none"><path d="M0.8 0.8H13.6L8.8 6.6V12.6H5.8V6.6Z" stroke="#3b3b3b" stroke-width="1.1" stroke-linejoin="round"/></svg>
<div class="t " style="left:1326.00px;top:103.00px;font-size:10.3px;line-height:13px;color:#242424;transform:scaleX(0.9713);transform-origin:left center;">Sort &amp;</div>
<div class="t " style="left:1324.80px;top:116.00px;font-size:10.3px;line-height:13px;color:#242424;transform:scaleX(0.9088);transform-origin:left center;">Filter</div>
<svg class="a" style="left:1349.00px;top:120.60px;" width="5.6" height="4" viewBox="0 0 5.6 4" fill="none"><path d="M0.5 0.6L2.80 2.80L5.1 0.6" stroke="#3b3b3b" stroke-width="1.15"/></svg>
<svg class="a" style="left:1365.00px;top:74.50px;" width="26" height="26" viewBox="0 0 26 26" fill="none"><circle cx="16" cy="9.3" r="8.6" stroke="#3b3b3b" stroke-width="1.1"/><path d="M9.8 15.6L1 24.4" stroke="#3b3b3b" stroke-width="1.2"/></svg>
<div class="t " style="left:1363.60px;top:103.00px;font-size:10.3px;line-height:13px;color:#242424;transform:scaleX(0.9877);transform-origin:left center;">Find &amp;</div>
<div class="t " style="left:1361.00px;top:116.00px;font-size:10.3px;line-height:13px;color:#242424;transform:scaleX(0.8873);transform-origin:left center;">Select</div>
<svg class="a" style="left:1390.00px;top:120.60px;" width="5.6" height="4" viewBox="0 0 5.6 4" fill="none"><path d="M0.5 0.6L2.80 2.80L5.1 0.6" stroke="#3b3b3b" stroke-width="1.15"/></svg>
<div class="t " style="left:1299.40px;top:136.00px;font-size:10.1px;line-height:13px;color:#3a3a3a;transform:scaleX(0.9715);transform-origin:left center;">Editing</div>
<div class="a" style="left:1403.90px;top:72.00px;width:1.00px;height:74.00px;background:#d4d4d4;"></div>
<svg class="a" style="left:1419.00px;top:75.00px;" width="24" height="24" viewBox="0 0 24 24" fill="none"><rect x="0.7" y="0.7" width="22.2" height="22.2" rx="1" stroke="#d9532c" stroke-width="1.3"/><rect x="3.6" y="3.6" width="7" height="7" stroke="#d9532c" stroke-width="1.1"/><rect x="3.6" y="13" width="7" height="7" stroke="#d9532c" stroke-width="1.1"/><rect x="13" y="3.6" width="7" height="7" stroke="#d9532c" stroke-width="1.1"/><rect x="13" y="13" width="7" height="7" stroke="#d9532c" stroke-width="1.1"/></svg>
<div class="t " style="left:1413.60px;top:103.00px;font-size:10.3px;line-height:13px;color:#242424;transform:scaleX(0.9851);transform-origin:left center;">Add-ins</div>
<div class="t " style="left:1414.40px;top:136.00px;font-size:10.1px;line-height:13px;color:#3a3a3a;transform:scaleX(0.9520);transform-origin:left center;">Add-ins</div>
<div class="a" style="left:1456.50px;top:72.00px;width:1.00px;height:74.00px;background:#d4d4d4;"></div>
<svg class="a" style="left:1471.00px;top:75.00px;" width="25" height="25" viewBox="0 0 25 25" fill="none"><rect x="0.6" y="0.6" width="22.8" height="22.8" stroke="#444" stroke-width="1.1" fill="#fff"/>
<path d="M0.6 3.4H23.4" stroke="#444" stroke-width="1.6"/><path d="M0.6 9.6H23.4M0.6 16H23.4M8 16V23.4M15.6 16V23.4" stroke="#555" stroke-width="0.9"/>
<circle cx="11.4" cy="10" r="6.6" fill="#fff" stroke="#444" stroke-width="1.1"/><circle cx="11.4" cy="10" r="4.9" fill="#fff" stroke="#666" stroke-width="0.8"/>
<rect x="7.6" y="8.8" width="1.8" height="4" fill="#aaa"/><rect x="10.2" y="6" width="2" height="6.8" fill="#fff" stroke="#333" stroke-width="0.8"/><rect x="13" y="7.6" width="2.2" height="5.2" fill="#3a96dd"/>
<path d="M16.2 14.8L23.2 22.4" stroke="#444" stroke-width="1.6"/></svg>
<div class="t " style="left:1466.00px;top:103.00px;font-size:10.3px;line-height:13px;color:#242424;transform:scaleX(0.9279);transform-origin:left center;">Analyze</div>
<div class="t " style="left:1473.80px;top:116.00px;font-size:10.3px;line-height:13px;color:#242424;transform:scaleX(0.8917);transform-origin:left center;">Data</div>
<svg class="a" style="left:1510.00px;top:75.00px;" width="25" height="23.4" viewBox="0 0 25 23.4" fill="none"><defs>
<linearGradient id="cp1" x1="0" y1="0" x2="1" y2="1"><stop offset="0" stop-color="#2a7de1"/><stop offset="1" stop-color="#1743c4"/></linearGradient>
<linearGradient id="cp2" x1="0" y1="0" x2="0" y2="1"><stop offset="0" stop-color="#1e9bf0"/><stop offset="0.35" stop-color="#2db5c8"/><stop offset="0.6" stop-color="#6cc84a"/><stop offset="0.85" stop-color="#e6d020"/><stop offset="1" stop-color="#f5b82a"/></linearGradient>
<linearGradient id="cp3" x1="0" y1="0" x2="0" y2="1"><stop offset="0" stop-color="#a458f0"/><stop offset="0.4" stop-color="#e860b0"/><stop offset="0.75" stop-color="#f57a5a"/><stop offset="1" stop-color="#f5a03a"/></linearGradient>
<linearGradient id="cp4" x1="0" y1="0" x2="1" y2="1"><stop offset="0" stop-color="#f57a2a"/><stop offset="1" stop-color="#e8402a"/></linearGradient></defs>
<path d="M12.5 0.2H15.5Q17.5 0.4 18.3 2.8L19.8 7.2H16L14.2 2.8Q13.8 0.9 12.5 0.2Z" fill="url(#cp1)"/>
<path d="M5.3 0.2H13Q16 0.2 15.2 3.5L10.5 15.5Q9.8 17 8 17H3Q0 17 0.3 13.5L2.2 3.2Q3 0.2 5.3 0.2Z" fill="url(#cp2)"/>
<path d="M6.7 17H10.5L12 21.3Q12.4 23 14 23H11Q8.6 23 8 21Z" fill="url(#cp4)"/>
<path d="M17.5 7H22Q25.2 7 24.6 10L22.4 19.6Q21.6 23 18.4 23H12Q10 23 10.8 21L14.8 9.2Q15.6 7 17.5 7Z" fill="url(#cp3)"/></svg>
<div class="t " style="left:1506.00px;top:103.00px;font-size:10.3px;line-height:13px;color:#242424;transform:scaleX(0.9981);transform-origin:left center;">Copilot</div>
<div class="a" style="left:1546.80px;top:72.00px;width:1.00px;height:74.00px;background:#d4d4d4;"></div>
<svg class="a" style="left:1570.60px;top:137.00px;" width="10" height="6" viewBox="0 0 10 6" fill="none"><path d="M0.6 0.6L4.7 4.7L8.8 0.6" stroke="#3b3b3b" stroke-width="1.2"/></svg>
<div class="a" style="left:29.90px;top:201.75px;width:1546.40px;height:606.85px;background:#fff;"></div>
<svg class="a" style="left:16.50px;top:189.50px;" width="10" height="10" viewBox="0 0 10 10" fill="none"><path d="M10 0V10H0Z" fill="#d6d6d6"/></svg>
<div class="a" style="left:8.00px;top:200.75px;width:1568.30px;height:1.00px;background:#c6c6c6;"></div>
<div class="a" style="left:29.00px;top:201.75px;width:1.00px;height:606.85px;background:#c6c6c6;"></div>
<div class="t " style="left:-93.42px;width:300px;text-align:center;top:187.00px;font-size:10.3px;line-height:13px;color:#3b3b3b;">A</div>
<div class="a" style="left:82.35px;top:186.00px;width:1.00px;height:15.00px;background:#e0e0e0;"></div>
<div class="t " style="left:-10.10px;width:300px;text-align:center;top:187.00px;font-size:10.3px;line-height:13px;color:#3b3b3b;">B</div>
<div class="a" style="left:195.65px;top:186.00px;width:1.00px;height:15.00px;background:#e0e0e0;"></div>
<div class="t " style="left:260.55px;width:300px;text-align:center;top:187.00px;font-size:10.3px;line-height:13px;color:#3b3b3b;">C</div>
<div class="a" style="left:623.65px;top:186.00px;width:1.00px;height:15.00px;background:#e0e0e0;"></div>
<div class="t " style="left:516.05px;width:300px;text-align:center;top:187.00px;font-size:10.3px;line-height:13px;color:#3b3b3b;">D</div>
<div class="a" style="left:706.65px;top:186.00px;width:1.00px;height:15.00px;background:#e0e0e0;"></div>
<div class="t " style="left:594.45px;width:300px;text-align:center;top:187.00px;font-size:10.3px;line-height:13px;color:#3b3b3b;">E</div>
<div class="a" style="left:780.45px;top:186.00px;width:1.00px;height:15.00px;background:#e0e0e0;"></div>
<div class="t " style="left:658.00px;width:300px;text-align:center;top:187.00px;font-size:10.3px;line-height:13px;color:#3b3b3b;">F</div>
<div class="a" style="left:833.75px;top:186.00px;width:1.00px;height:15.00px;background:#e0e0e0;"></div>
<div class="t " style="left:711.35px;width:300px;text-align:center;top:187.00px;font-size:10.3px;line-height:13px;color:#3b3b3b;">G</div>
<div class="a" style="left:887.15px;top:186.00px;width:1.00px;height:15.00px;background:#e0e0e0;"></div>
<div class="t " style="left:807.15px;width:300px;text-align:center;top:187.00px;font-size:10.3px;line-height:13px;color:#3b3b3b;">H</div>
<div class="a" style="left:1025.35px;top:186.00px;width:1.00px;height:15.00px;background:#e0e0e0;"></div>
<div class="t " style="left:902.90px;width:300px;text-align:center;top:187.00px;font-size:10.3px;line-height:13px;color:#3b3b3b;">I</div>
<div class="a" style="left:1078.65px;top:186.00px;width:1.00px;height:15.00px;background:#e0e0e0;"></div>
<div class="t " style="left:956.22px;width:300px;text-align:center;top:187.00px;font-size:10.3px;line-height:13px;color:#3b3b3b;">J</div>
<div class="a" style="left:1131.98px;top:186.00px;width:1.00px;height:15.00px;background:#e0e0e0;"></div>
<div class="t " style="left:1009.55px;width:300px;text-align:center;top:187.00px;font-size:10.3px;line-height:13px;color:#3b3b3b;">K</div>
<div class="a" style="left:1185.32px;top:186.00px;width:1.00px;height:15.00px;background:#e0e0e0;"></div>
<div class="t " style="left:1062.88px;width:300px;text-align:center;top:187.00px;font-size:10.3px;line-height:13px;color:#3b3b3b;">L</div>
<div class="a" style="left:1238.65px;top:186.00px;width:1.00px;height:15.00px;background:#e0e0e0;"></div>
<div class="t " style="left:1116.22px;width:300px;text-align:center;top:187.00px;font-size:10.3px;line-height:13px;color:#3b3b3b;">M</div>
<div class="a" style="left:1291.98px;top:186.00px;width:1.00px;height:15.00px;background:#e0e0e0;"></div>
<div class="t " style="left:1169.55px;width:300px;text-align:center;top:187.00px;font-size:10.3px;line-height:13px;color:#3b3b3b;">N</div>
<div class="a" style="left:1345.32px;top:186.00px;width:1.00px;height:15.00px;background:#e0e0e0;"></div>
<div class="t " style="left:1222.88px;width:300px;text-align:center;top:187.00px;font-size:10.3px;line-height:13px;color:#3b3b3b;">O</div>
<div class="a" style="left:1398.65px;top:186.00px;width:1.00px;height:15.00px;background:#e0e0e0;"></div>
<div class="t " style="left:1276.21px;width:300px;text-align:center;top:187.00px;font-size:10.3px;line-height:13px;color:#3b3b3b;">P</div>
<div class="a" style="left:1451.98px;top:186.00px;width:1.00px;height:15.00px;background:#e0e0e0;"></div>
<div class="t " style="left:1329.55px;width:300px;text-align:center;top:187.00px;font-size:10.3px;line-height:13px;color:#3b3b3b;">Q</div>
<div class="a" style="left:1505.31px;top:186.00px;width:1.00px;height:15.00px;background:#e0e0e0;"></div>
<div class="t " style="left:1382.88px;width:300px;text-align:center;top:187.00px;font-size:10.3px;line-height:13px;color:#3b3b3b;">R</div>
<div class="a" style="left:1558.65px;top:186.00px;width:1.00px;height:15.00px;background:#e0e0e0;"></div>
<div class="a" style="left:82.35px;top:201.75px;width:1.00px;height:606.85px;background:#e2e2e2;"></div>
<div class="a" style="left:195.65px;top:201.75px;width:1.00px;height:606.85px;background:#e2e2e2;"></div>
<div class="a" style="left:623.65px;top:201.75px;width:1.00px;height:606.85px;background:#e2e2e2;"></div>
<div class="a" style="left:706.65px;top:201.75px;width:1.00px;height:606.85px;background:#e2e2e2;"></div>
<div class="a" style="left:780.45px;top:201.75px;width:1.00px;height:606.85px;background:#e2e2e2;"></div>
<div class="a" style="left:833.75px;top:201.75px;width:1.00px;height:606.85px;background:#e2e2e2;"></div>
<div class="a" style="left:887.15px;top:201.75px;width:1.00px;height:606.85px;background:#e2e2e2;"></div>
<div class="a" style="left:1025.35px;top:201.75px;width:1.00px;height:606.85px;background:#e2e2e2;"></div>
<div class="a" style="left:1078.65px;top:201.75px;width:1.00px;height:606.85px;background:#e2e2e2;"></div>
<div class="a" style="left:1131.98px;top:201.75px;width:1.00px;height:606.85px;background:#e2e2e2;"></div>
<div class="a" style="left:1185.32px;top:201.75px;width:1.00px;height:606.85px;background:#e2e2e2;"></div>
<div class="a" style="left:1238.65px;top:201.75px;width:1.00px;height:606.85px;background:#e2e2e2;"></div>
<div class="a" style="left:1291.98px;top:201.75px;width:1.00px;height:606.85px;background:#e2e2e2;"></div>
<div class="a" style="left:1345.32px;top:201.75px;width:1.00px;height:606.85px;background:#e2e2e2;"></div>
<div class="a" style="left:1398.65px;top:201.75px;width:1.00px;height:606.85px;background:#e2e2e2;"></div>
<div class="a" style="left:1451.98px;top:201.75px;width:1.00px;height:606.85px;background:#e2e2e2;"></div>
<div class="a" style="left:1505.31px;top:201.75px;width:1.00px;height:606.85px;background:#e2e2e2;"></div>
<div class="a" style="left:1558.65px;top:201.75px;width:1.00px;height:606.85px;background:#e2e2e2;"></div>
<div class="a" style="left:29.90px;top:217.92px;width:1546.40px;height:1.00px;background:#e2e2e2;"></div>
<div class="a" style="left:12.00px;top:217.92px;width:16.90px;height:1.00px;background:#e4e4e4;"></div>
<div class="t " style="left:-131.10px;width:300px;text-align:center;top:205.00px;font-size:10.3px;line-height:13px;color:#3b3b3b;">1</div>
<div class="a" style="left:29.90px;top:234.58px;width:1546.40px;height:1.00px;background:#e2e2e2;"></div>
<div class="a" style="left:12.00px;top:234.58px;width:16.90px;height:1.00px;background:#e4e4e4;"></div>
<div class="t " style="left:-131.10px;width:300px;text-align:center;top:222.00px;font-size:10.3px;line-height:13px;color:#3b3b3b;">2</div>
<div class="a" style="left:29.90px;top:251.25px;width:1546.40px;height:1.00px;background:#e2e2e2;"></div>
<div class="a" style="left:12.00px;top:251.25px;width:16.90px;height:1.00px;background:#e4e4e4;"></div>
<div class="t " style="left:-131.10px;width:300px;text-align:center;top:238.00px;font-size:10.3px;line-height:13px;color:#3b3b3b;">3</div>
<div class="a" style="left:29.90px;top:267.92px;width:1546.40px;height:1.00px;background:#e2e2e2;"></div>
<div class="a" style="left:12.00px;top:267.92px;width:16.90px;height:1.00px;background:#e4e4e4;"></div>
<div class="t " style="left:-131.10px;width:300px;text-align:center;top:255.00px;font-size:10.3px;line-height:13px;color:#3b3b3b;">4</div>
<div class="a" style="left:29.90px;top:284.59px;width:1546.40px;height:1.00px;background:#e2e2e2;"></div>
<div class="a" style="left:12.00px;top:284.59px;width:16.90px;height:1.00px;background:#e4e4e4;"></div>
<div class="t " style="left:-131.10px;width:300px;text-align:center;top:272.00px;font-size:10.3px;line-height:13px;color:#3b3b3b;">5</div>
<div class="a" style="left:29.90px;top:301.25px;width:1546.40px;height:1.00px;background:#e2e2e2;"></div>
<div class="a" style="left:12.00px;top:301.25px;width:16.90px;height:1.00px;background:#e4e4e4;"></div>
<div class="t " style="left:-131.10px;width:300px;text-align:center;top:288.00px;font-size:10.3px;line-height:13px;color:#3b3b3b;">6</div>
<div class="a" style="left:29.90px;top:317.92px;width:1546.40px;height:1.00px;background:#e2e2e2;"></div>
<div class="a" style="left:12.00px;top:317.92px;width:16.90px;height:1.00px;background:#e4e4e4;"></div>
<div class="t " style="left:-131.10px;width:300px;text-align:center;top:305.00px;font-size:10.3px;line-height:13px;color:#3b3b3b;">7</div>
<div class="a" style="left:29.90px;top:334.59px;width:1546.40px;height:1.00px;background:#e2e2e2;"></div>
<div class="a" style="left:12.00px;top:334.59px;width:16.90px;height:1.00px;background:#e4e4e4;"></div>
<div class="t " style="left:-131.10px;width:300px;text-align:center;top:322.00px;font-size:10.3px;line-height:13px;color:#3b3b3b;">8</div>
<div class="a" style="left:29.90px;top:351.25px;width:1546.40px;height:1.00px;background:#e2e2e2;"></div>
<div class="a" style="left:12.00px;top:351.25px;width:16.90px;height:1.00px;background:#e4e4e4;"></div>
<div class="t " style="left:-131.10px;width:300px;text-align:center;top:338.00px;font-size:10.3px;line-height:13px;color:#3b3b3b;">9</div>
<div class="a" style="left:29.90px;top:367.92px;width:1546.40px;height:1.00px;background:#e2e2e2;"></div>
<div class="a" style="left:12.00px;top:367.92px;width:16.90px;height:1.00px;background:#e4e4e4;"></div>
<div class="t " style="left:-131.10px;width:300px;text-align:center;top:355.00px;font-size:10.3px;line-height:13px;color:#3b3b3b;">10</div>
<div class="a" style="left:29.90px;top:384.59px;width:1546.40px;height:1.00px;background:#e2e2e2;"></div>
<div class="a" style="left:12.00px;top:384.59px;width:16.90px;height:1.00px;background:#e4e4e4;"></div>
<div class="t " style="left:-131.10px;width:300px;text-align:center;top:372.00px;font-size:10.3px;line-height:13px;color:#3b3b3b;">11</div>
<div class="a" style="left:29.90px;top:401.25px;width:1546.40px;height:1.00px;background:#e2e2e2;"></div>
<div class="a" style="left:12.00px;top:401.25px;width:16.90px;height:1.00px;background:#e4e4e4;"></div>
<div class="t " style="left:-131.10px;width:300px;text-align:center;top:388.00px;font-size:10.3px;line-height:13px;color:#3b3b3b;">12</div>
<div class="a" style="left:29.90px;top:417.92px;width:1546.40px;height:1.00px;background:#e2e2e2;"></div>
<div class="a" style="left:12.00px;top:417.92px;width:16.90px;height:1.00px;background:#e4e4e4;"></div>
<div class="t " style="left:-131.10px;width:300px;text-align:center;top:405.00px;font-size:10.3px;line-height:13px;color:#3b3b3b;">13</div>
<div class="a" style="left:29.90px;top:434.59px;width:1546.40px;height:1.00px;background:#e2e2e2;"></div>
<div class="a" style="left:12.00px;top:434.59px;width:16.90px;height:1.00px;background:#e4e4e4;"></div>
<div class="t " style="left:-131.10px;width:300px;text-align:center;top:422.00px;font-size:10.3px;line-height:13px;color:#3b3b3b;">14</div>
<div class="a" style="left:29.90px;top:451.25px;width:1546.40px;height:1.00px;background:#e2e2e2;"></div>
<div class="a" style="left:12.00px;top:451.25px;width:16.90px;height:1.00px;background:#e4e4e4;"></div>
<div class="t " style="left:-131.10px;width:300px;text-align:center;top:438.00px;font-size:10.3px;line-height:13px;color:#3b3b3b;">15</div>
<div class="a" style="left:29.90px;top:467.92px;width:1546.40px;height:1.00px;background:#e2e2e2;"></div>
<div class="a" style="left:12.00px;top:467.92px;width:16.90px;height:1.00px;background:#e4e4e4;"></div>
<div class="t " style="left:-131.10px;width:300px;text-align:center;top:455.00px;font-size:10.3px;line-height:13px;color:#3b3b3b;">16</div>
<div class="a" style="left:29.90px;top:484.59px;width:1546.40px;height:1.00px;background:#e2e2e2;"></div>
<div class="a" style="left:12.00px;top:484.59px;width:16.90px;height:1.00px;background:#e4e4e4;"></div>
<div class="t " style="left:-131.10px;width:300px;text-align:center;top:472.00px;font-size:10.3px;line-height:13px;color:#3b3b3b;">17</div>
<div class="a" style="left:29.90px;top:501.26px;width:1546.40px;height:1.00px;background:#e2e2e2;"></div>
<div class="a" style="left:12.00px;top:501.26px;width:16.90px;height:1.00px;background:#e4e4e4;"></div>
<div class="t " style="left:-131.10px;width:300px;text-align:center;top:488.00px;font-size:10.3px;line-height:13px;color:#3b3b3b;">18</div>
<div class="a" style="left:29.90px;top:517.92px;width:1546.40px;height:1.00px;background:#e2e2e2;"></div>
<div class="a" style="left:12.00px;top:517.92px;width:16.90px;height:1.00px;background:#e4e4e4;"></div>
<div class="t " style="left:-131.10px;width:300px;text-align:center;top:505.00px;font-size:10.3px;line-height:13px;color:#3b3b3b;">19</div>
<div class="a" style="left:29.90px;top:534.59px;width:1546.40px;height:1.00px;background:#e2e2e2;"></div>
<div class="a" style="left:12.00px;top:534.59px;width:16.90px;height:1.00px;background:#e4e4e4;"></div>
<div class="t " style="left:-131.10px;width:300px;text-align:center;top:522.00px;font-size:10.3px;line-height:13px;color:#3b3b3b;">20</div>
<div class="a" style="left:29.90px;top:551.26px;width:1546.40px;height:1.00px;background:#e2e2e2;"></div>
<div class="a" style="left:12.00px;top:551.26px;width:16.90px;height:1.00px;background:#e4e4e4;"></div>
<div class="t " style="left:-131.10px;width:300px;text-align:center;top:538.00px;font-size:10.3px;line-height:13px;color:#3b3b3b;">21</div>
<div class="a" style="left:29.90px;top:567.92px;width:1546.40px;height:1.00px;background:#e2e2e2;"></div>
<div class="a" style="left:12.00px;top:567.92px;width:16.90px;height:1.00px;background:#e4e4e4;"></div>
<div class="t " style="left:-131.10px;width:300px;text-align:center;top:555.00px;font-size:10.3px;line-height:13px;color:#3b3b3b;">22</div>
<div class="a" style="left:29.90px;top:584.59px;width:1546.40px;height:1.00px;background:#e2e2e2;"></div>
<div class="a" style="left:12.00px;top:584.59px;width:16.90px;height:1.00px;background:#e4e4e4;"></div>
<div class="t " style="left:-131.10px;width:300px;text-align:center;top:572.00px;font-size:10.3px;line-height:13px;color:#3b3b3b;">23</div>
<div class="a" style="left:29.90px;top:601.26px;width:1546.40px;height:1.00px;background:#e2e2e2;"></div>
<div class="a" style="left:12.00px;top:601.26px;width:16.90px;height:1.00px;background:#e4e4e4;"></div>
<div class="t " style="left:-131.10px;width:300px;text-align:center;top:588.00px;font-size:10.3px;line-height:13px;color:#3b3b3b;">24</div>
<div class="a" style="left:29.90px;top:617.93px;width:1546.40px;height:1.00px;background:#e2e2e2;"></div>
<div class="a" style="left:12.00px;top:617.93px;width:16.90px;height:1.00px;background:#e4e4e4;"></div>
<div class="t " style="left:-131.10px;width:300px;text-align:center;top:605.00px;font-size:10.3px;line-height:13px;color:#3b3b3b;">25</div>
<div class="a" style="left:29.90px;top:634.59px;width:1546.40px;height:1.00px;background:#e2e2e2;"></div>
<div class="a" style="left:12.00px;top:634.59px;width:16.90px;height:1.00px;background:#e4e4e4;"></div>
<div class="t " style="left:-131.10px;width:300px;text-align:center;top:622.00px;font-size:10.3px;line-height:13px;color:#3b3b3b;">26</div>
<div class="a" style="left:29.90px;top:651.26px;width:1546.40px;height:1.00px;background:#e2e2e2;"></div>
<div class="a" style="left:12.00px;top:651.26px;width:16.90px;height:1.00px;background:#e4e4e4;"></div>
<div class="t " style="left:-131.10px;width:300px;text-align:center;top:638.00px;font-size:10.3px;line-height:13px;color:#3b3b3b;">27</div>
<div class="a" style="left:29.90px;top:667.93px;width:1546.40px;height:1.00px;background:#e2e2e2;"></div>
<div class="a" style="left:12.00px;top:667.93px;width:16.90px;height:1.00px;background:#e4e4e4;"></div>
<div class="t " style="left:-131.10px;width:300px;text-align:center;top:655.00px;font-size:10.3px;line-height:13px;color:#3b3b3b;">28</div>
<div class="a" style="left:29.90px;top:684.59px;width:1546.40px;height:1.00px;background:#e2e2e2;"></div>
<div class="a" style="left:12.00px;top:684.59px;width:16.90px;height:1.00px;background:#e4e4e4;"></div>
<div class="t " style="left:-131.10px;width:300px;text-align:center;top:672.00px;font-size:10.3px;line-height:13px;color:#3b3b3b;">29</div>
<div class="a" style="left:29.90px;top:701.26px;width:1546.40px;height:1.00px;background:#e2e2e2;"></div>
<div class="a" style="left:12.00px;top:701.26px;width:16.90px;height:1.00px;background:#e4e4e4;"></div>
<div class="t " style="left:-131.10px;width:300px;text-align:center;top:688.00px;font-size:10.3px;line-height:13px;color:#3b3b3b;">30</div>
<div class="a" style="left:29.90px;top:717.93px;width:1546.40px;height:1.00px;background:#e2e2e2;"></div>
<div class="a" style="left:12.00px;top:717.93px;width:16.90px;height:1.00px;background:#e4e4e4;"></div>
<div class="t " style="left:-131.10px;width:300px;text-align:center;top:705.00px;font-size:10.3px;line-height:13px;color:#3b3b3b;">31</div>
<div class="a" style="left:29.90px;top:734.59px;width:1546.40px;height:1.00px;background:#e2e2e2;"></div>
<div class="a" style="left:12.00px;top:734.59px;width:16.90px;height:1.00px;background:#e4e4e4;"></div>
<div class="t " style="left:-131.10px;width:300px;text-align:center;top:722.00px;font-size:10.3px;line-height:13px;color:#3b3b3b;">32</div>
<div class="a" style="left:29.90px;top:751.26px;width:1546.40px;height:1.00px;background:#e2e2e2;"></div>
<div class="a" style="left:12.00px;top:751.26px;width:16.90px;height:1.00px;background:#e4e4e4;"></div>
<div class="t " style="left:-131.10px;width:300px;text-align:center;top:738.00px;font-size:10.3px;line-height:13px;color:#3b3b3b;">33</div>
<div class="a" style="left:29.90px;top:767.93px;width:1546.40px;height:1.00px;background:#e2e2e2;"></div>
<div class="a" style="left:12.00px;top:767.93px;width:16.90px;height:1.00px;background:#e4e4e4;"></div>
<div class="t " style="left:-131.10px;width:300px;text-align:center;top:755.00px;font-size:10.3px;line-height:13px;color:#3b3b3b;">34</div>
<div class="a" style="left:29.90px;top:784.60px;width:1546.40px;height:1.00px;background:#e2e2e2;"></div>
<div class="a" style="left:12.00px;top:784.60px;width:16.90px;height:1.00px;background:#e4e4e4;"></div>
<div class="t " style="left:-131.10px;width:300px;text-align:center;top:772.00px;font-size:10.3px;line-height:13px;color:#3b3b3b;">35</div>
<div class="a" style="left:29.90px;top:801.26px;width:1546.40px;height:1.00px;background:#e2e2e2;"></div>
<div class="a" style="left:12.00px;top:801.26px;width:16.90px;height:1.00px;background:#e4e4e4;"></div>
<div class="t " style="left:-131.10px;width:300px;text-align:center;top:788.00px;font-size:10.3px;line-height:13px;color:#3b3b3b;">36</div>
<div class="t " style="left:-131.10px;width:300px;text-align:center;top:805.00px;font-size:10.3px;line-height:13px;color:#3b3b3b;">37</div>
<div class="a" style="left:28.40px;top:200.25px;width:2.00px;height:2.00px;background:#107c41;"></div>
<div class="c" style="left:31.50px;top:203px;width:50.75px;">class_name*</div>
<div class="c" style="left:84.85px;top:203px;width:110.70px;">subject_name*</div>
<div class="c" style="left:198.15px;top:203px;width:425.40px;">question*</div>
<div class="c" style="left:626.15px;top:203px;width:80.40px;">option_a*</div>
<div class="c" style="left:709.15px;top:203px;width:71.20px;">option_b*</div>
<div class="c" style="left:782.95px;top:203px;width:50.70px;">option_c</div>
<div class="c" style="left:836.25px;top:203px;width:50.80px;">option_d</div>
<div class="c" style="left:889.65px;top:203px;width:135.60px;">correct_answer*(A/B/C/D)</div>
<div class="c" style="left:1027.85px;top:203px;width:50.70px;">marks*</div>
<div class="c" style="left:31.50px;top:220px;width:50.75px;">Class 5</div>
<div class="c" style="left:84.85px;top:220px;width:110.70px;">Mathematics (501)</div>
<div class="c" style="left:198.15px;top:220px;width:425.40px;">What is the place value of 7 in the number 8,745,321?</div>
<div class="c" style="right:894.75px;top:220px;overflow:visible;transform:scaleX(0.95);transform-origin:right center;">7,000</div>
<div class="c" style="right:820.95px;top:220px;overflow:visible;transform:scaleX(0.95);transform-origin:right center;">70,000</div>
<div class="c" style="right:767.65px;top:220px;overflow:visible;transform:scaleX(0.95);transform-origin:right center;">7,00,000</div>
<div class="c" style="right:714.25px;top:220px;overflow:visible;transform:scaleX(0.95);transform-origin:right center;">70,00,000</div>
<div class="c" style="left:889.65px;top:220px;width:135.60px;">C</div>
<div class="c" style="right:522.75px;top:220px;overflow:visible;transform:scaleX(0.95);transform-origin:right center;">1</div>
<div class="c" style="left:31.50px;top:237px;width:50.75px;">Class 5</div>
<div class="c" style="left:84.85px;top:237px;width:110.70px;">Mathematics (501)</div>
<div class="c" style="left:198.15px;top:237px;width:425.40px;">Which of the following is the Roman numeral for 49?</div>
<div class="c" style="left:626.15px;top:237px;width:80.40px;">XLIX</div>
<div class="c" style="left:709.15px;top:237px;width:71.20px;">XXXIX</div>
<div class="c" style="left:782.95px;top:237px;width:50.70px;">LIX</div>
<div class="c" style="left:836.25px;top:237px;width:50.80px;">XCIX</div>
<div class="c" style="left:889.65px;top:237px;width:135.60px;">A</div>
<div class="c" style="right:522.75px;top:237px;overflow:visible;transform:scaleX(0.95);transform-origin:right center;">1</div>
<div class="c" style="left:31.50px;top:253px;width:50.75px;">Class 5</div>
<div class="c" style="left:84.85px;top:253px;width:110.70px;">Mathematics (501)</div>
<div class="c" style="left:198.15px;top:253px;width:425.40px;">Round off 5,876 to the nearest hundred.</div>
<div class="c" style="right:894.75px;top:253px;overflow:visible;transform:scaleX(0.95);transform-origin:right center;">5,800</div>
<div class="c" style="right:820.95px;top:253px;overflow:visible;transform:scaleX(0.95);transform-origin:right center;">5,900</div>
<div class="c" style="right:767.65px;top:253px;overflow:visible;transform:scaleX(0.95);transform-origin:right center;">5,880</div>
<div class="c" style="right:714.25px;top:253px;overflow:visible;transform:scaleX(0.95);transform-origin:right center;">6,000</div>
<div class="c" style="left:889.65px;top:253px;width:135.60px;">B</div>
<div class="c" style="right:522.75px;top:253px;overflow:visible;transform:scaleX(0.95);transform-origin:right center;">1</div>
<div class="c" style="left:31.50px;top:270px;width:50.75px;">Class 5</div>
<div class="c" style="left:84.85px;top:270px;width:110.70px;">Mathematics (501)</div>
<div class="c" style="left:198.15px;top:270px;width:425.40px;">A factory produces 2,450 toys each day. How many toys will it produce in 15 days?</div>
<div class="c" style="right:894.75px;top:270px;overflow:visible;transform:scaleX(0.95);transform-origin:right center;">36,750</div>
<div class="c" style="right:820.95px;top:270px;overflow:visible;transform:scaleX(0.95);transform-origin:right center;">35,750</div>
<div class="c" style="right:767.65px;top:270px;overflow:visible;transform:scaleX(0.95);transform-origin:right center;">34,250</div>
<div class="c" style="right:714.25px;top:270px;overflow:visible;transform:scaleX(0.95);transform-origin:right center;">38,150</div>
<div class="c" style="left:889.65px;top:270px;width:135.60px;">A</div>
<div class="c" style="right:522.75px;top:270px;overflow:visible;transform:scaleX(0.95);transform-origin:right center;">1</div>
<div class="c" style="left:31.50px;top:287px;width:50.75px;">Class 5</div>
<div class="c" style="left:84.85px;top:287px;width:110.70px;">Mathematics (501)</div>
<div class="c" style="left:198.15px;top:287px;width:425.40px;">If a box contains 144 apples, how many apples are there in 25 such boxes?</div>
<div class="c" style="right:894.75px;top:287px;overflow:visible;transform:scaleX(0.95);transform-origin:right center;">3,000</div>
<div class="c" style="right:820.95px;top:287px;overflow:visible;transform:scaleX(0.95);transform-origin:right center;">3,600</div>
<div class="c" style="right:767.65px;top:287px;overflow:visible;transform:scaleX(0.95);transform-origin:right center;">2,500</div>
<div class="c" style="right:714.25px;top:287px;overflow:visible;transform:scaleX(0.95);transform-origin:right center;">4,000</div>
<div class="c" style="left:889.65px;top:287px;width:135.60px;">B</div>
<div class="c" style="right:522.75px;top:287px;overflow:visible;transform:scaleX(0.95);transform-origin:right center;">1</div>
<div class="c" style="left:31.50px;top:303px;width:50.75px;">Class 5</div>
<div class="c" style="left:84.85px;top:303px;width:110.70px;">Mathematics (501)</div>
<div class="c" style="left:198.15px;top:303px;width:425.40px;">Subtract 4,589 from 9,000.</div>
<div class="c" style="right:894.75px;top:303px;overflow:visible;transform:scaleX(0.95);transform-origin:right center;">4,411</div>
<div class="c" style="right:820.95px;top:303px;overflow:visible;transform:scaleX(0.95);transform-origin:right center;">5,411</div>
<div class="c" style="right:767.65px;top:303px;overflow:visible;transform:scaleX(0.95);transform-origin:right center;">4,511</div>
<div class="c" style="right:714.25px;top:303px;overflow:visible;transform:scaleX(0.95);transform-origin:right center;">5,511</div>
<div class="c" style="left:889.65px;top:303px;width:135.60px;">A</div>
<div class="c" style="right:522.75px;top:303px;overflow:visible;transform:scaleX(0.95);transform-origin:right center;">1</div>
<div class="c" style="left:31.50px;top:320px;width:50.75px;">Class 5</div>
<div class="c" style="left:84.85px;top:320px;width:110.70px;">Mathematics (501)</div>
<div class="c" style="left:198.15px;top:320px;width:425.40px;">What is the sum of the largest 4-digit number and the smallest 3-digit number?</div>
<div class="c" style="right:894.75px;top:320px;overflow:visible;transform:scaleX(0.95);transform-origin:right center;">10,099</div>
<div class="c" style="right:820.95px;top:320px;overflow:visible;transform:scaleX(0.95);transform-origin:right center;">9,999</div>
<div class="c" style="right:767.65px;top:320px;overflow:visible;transform:scaleX(0.95);transform-origin:right center;">10,000</div>
<div class="c" style="right:714.25px;top:320px;overflow:visible;transform:scaleX(0.95);transform-origin:right center;">10,999</div>
<div class="c" style="left:889.65px;top:320px;width:135.60px;">A</div>
<div class="c" style="right:522.75px;top:320px;overflow:visible;transform:scaleX(0.95);transform-origin:right center;">1</div>
<div class="c" style="left:31.50px;top:337px;width:50.75px;">Class 5</div>
<div class="c" style="left:84.85px;top:337px;width:110.70px;">Mathematics (501)</div>
<div class="c" style="left:198.15px;top:337px;width:425.40px;">What is the Highest Common Factor (HCF) of 12 and 18?</div>
<div class="c" style="right:894.75px;top:337px;overflow:visible;transform:scaleX(0.95);transform-origin:right center;">3</div>
<div class="c" style="right:820.95px;top:337px;overflow:visible;transform:scaleX(0.95);transform-origin:right center;">6</div>
<div class="c" style="right:767.65px;top:337px;overflow:visible;transform:scaleX(0.95);transform-origin:right center;">9</div>
<div class="c" style="right:714.25px;top:337px;overflow:visible;transform:scaleX(0.95);transform-origin:right center;">12</div>
<div class="c" style="left:889.65px;top:337px;width:135.60px;">B</div>
<div class="c" style="right:522.75px;top:337px;overflow:visible;transform:scaleX(0.95);transform-origin:right center;">1</div>
<div class="c" style="left:31.50px;top:353px;width:50.75px;">Class 5</div>
<div class="c" style="left:84.85px;top:353px;width:110.70px;">Mathematics (501)</div>
<div class="c" style="left:198.15px;top:353px;width:425.40px;">What is the Least Common Multiple (LCM) of 8 and 10?</div>
<div class="c" style="right:894.75px;top:353px;overflow:visible;transform:scaleX(0.95);transform-origin:right center;">80</div>
<div class="c" style="right:820.95px;top:353px;overflow:visible;transform:scaleX(0.95);transform-origin:right center;">20</div>
<div class="c" style="right:767.65px;top:353px;overflow:visible;transform:scaleX(0.95);transform-origin:right center;">40</div>
<div class="c" style="right:714.25px;top:353px;overflow:visible;transform:scaleX(0.95);transform-origin:right center;">60</div>
<div class="c" style="left:889.65px;top:353px;width:135.60px;">C</div>
<div class="c" style="right:522.75px;top:353px;overflow:visible;transform:scaleX(0.95);transform-origin:right center;">1</div>
<div class="c" style="left:31.50px;top:370px;width:50.75px;">Class 5</div>
<div class="c" style="left:84.85px;top:370px;width:110.70px;">Mathematics (501)</div>
<div class="c" style="left:198.15px;top:370px;width:425.40px;">Which of these is a prime number?</div>
<div class="c" style="right:894.75px;top:370px;overflow:visible;transform:scaleX(0.95);transform-origin:right center;">9</div>
<div class="c" style="right:820.95px;top:370px;overflow:visible;transform:scaleX(0.95);transform-origin:right center;">15</div>
<div class="c" style="right:767.65px;top:370px;overflow:visible;transform:scaleX(0.95);transform-origin:right center;">21</div>
<div class="c" style="right:714.25px;top:370px;overflow:visible;transform:scaleX(0.95);transform-origin:right center;">23</div>
<div class="c" style="left:889.65px;top:370px;width:135.60px;">D</div>
<div class="c" style="right:522.75px;top:370px;overflow:visible;transform:scaleX(0.95);transform-origin:right center;">1</div>
<div class="c" style="left:31.50px;top:387px;width:50.75px;">Class 5</div>
<div class="c" style="left:84.85px;top:387px;width:110.70px;">Mathematics (501)</div>
<div class="c" style="left:198.15px;top:387px;width:425.40px;">What is the equivalent fraction of 3/5 with a denominator of 20?</div>
<div class="c" style="right:894.75px;top:387px;overflow:visible;transform:scaleX(0.95);transform-origin:right center;">Dec-20</div>
<div class="c" style="right:820.95px;top:387px;overflow:visible;transform:scaleX(0.95);transform-origin:right center;">Sep-20</div>
<div class="c" style="left:782.95px;top:387px;width:50.70px;">15/20</div>
<div class="c" style="right:714.25px;top:387px;overflow:visible;transform:scaleX(0.95);transform-origin:right center;">Jun-20</div>
<div class="c" style="left:889.65px;top:387px;width:135.60px;">A</div>
<div class="c" style="right:522.75px;top:387px;overflow:visible;transform:scaleX(0.95);transform-origin:right center;">1</div>
<div class="c" style="left:31.50px;top:403px;width:50.75px;">Class 5</div>
<div class="c" style="left:84.85px;top:403px;width:110.70px;">Mathematics (501)</div>
<div class="c" style="left:198.15px;top:403px;width:425.40px;">Which fraction is the largest: 1/2, 3/4, 2/5, 5/8?</div>
<div class="c" style="right:894.75px;top:403px;overflow:visible;transform:scaleX(0.95);transform-origin:right center;">01-Feb</div>
<div class="c" style="right:820.95px;top:403px;overflow:visible;transform:scaleX(0.95);transform-origin:right center;">03-Apr</div>
<div class="c" style="right:767.65px;top:403px;overflow:visible;transform:scaleX(0.95);transform-origin:right center;">02-May</div>
<div class="c" style="right:714.25px;top:403px;overflow:visible;transform:scaleX(0.95);transform-origin:right center;">05-Aug</div>
<div class="c" style="left:889.65px;top:403px;width:135.60px;">B</div>
<div class="c" style="right:522.75px;top:403px;overflow:visible;transform:scaleX(0.95);transform-origin:right center;">1</div>
<div class="c" style="left:31.50px;top:420px;width:50.75px;">Class 5</div>
<div class="c" style="left:84.85px;top:420px;width:110.70px;">Mathematics (501)</div>
<div class="c" style="left:198.15px;top:420px;width:425.40px;">Solve: 2/7 + 4/7</div>
<div class="c" style="right:894.75px;top:420px;overflow:visible;transform:scaleX(0.95);transform-origin:right center;">Jun-14</div>
<div class="c" style="right:820.95px;top:420px;overflow:visible;transform:scaleX(0.95);transform-origin:right center;">06-Jul</div>
<div class="c" style="right:767.65px;top:420px;overflow:visible;transform:scaleX(0.95);transform-origin:right center;">Aug-49</div>
<div class="c" style="right:714.25px;top:420px;overflow:visible;transform:scaleX(0.95);transform-origin:right center;">05-Jul</div>
<div class="c" style="left:889.65px;top:420px;width:135.60px;">B</div>
<div class="c" style="right:522.75px;top:420px;overflow:visible;transform:scaleX(0.95);transform-origin:right center;">1</div>
<div class="c" style="left:31.50px;top:437px;width:50.75px;">Class 5</div>
<div class="c" style="left:84.85px;top:437px;width:110.70px;">Mathematics (501)</div>
<div class="c" style="left:198.15px;top:437px;width:425.40px;">What is 1/4 of 36?</div>
<div class="c" style="right:894.75px;top:437px;overflow:visible;transform:scaleX(0.95);transform-origin:right center;">6</div>
<div class="c" style="right:820.95px;top:437px;overflow:visible;transform:scaleX(0.95);transform-origin:right center;">8</div>
<div class="c" style="right:767.65px;top:437px;overflow:visible;transform:scaleX(0.95);transform-origin:right center;">9</div>
<div class="c" style="right:714.25px;top:437px;overflow:visible;transform:scaleX(0.95);transform-origin:right center;">12</div>
<div class="c" style="left:889.65px;top:437px;width:135.60px;">C</div>
<div class="c" style="right:522.75px;top:437px;overflow:visible;transform:scaleX(0.95);transform-origin:right center;">1</div>
<div class="c" style="left:31.50px;top:453px;width:50.75px;">Class 5</div>
<div class="c" style="left:84.85px;top:453px;width:110.70px;">Mathematics (501)</div>
<div class="c" style="left:198.15px;top:453px;width:425.40px;">How is the decimal 0.65 written as a fraction?</div>
<div class="c" style="left:626.15px;top:453px;width:80.40px;">65/10</div>
<div class="c" style="left:709.15px;top:453px;width:71.20px;">65/100</div>
<div class="c" style="left:782.95px;top:453px;width:50.70px;">6.5/10</div>
<div class="c" style="left:836.25px;top:453px;width:50.80px;">65/1000</div>
<div class="c" style="left:889.65px;top:453px;width:135.60px;">B</div>
<div class="c" style="right:522.75px;top:453px;overflow:visible;transform:scaleX(0.95);transform-origin:right center;">1</div>
<div class="c" style="left:31.50px;top:470px;width:50.75px;">Class 5</div>
<div class="c" style="left:84.85px;top:470px;width:110.70px;">Mathematics (501)</div>
<div class="c" style="left:198.15px;top:470px;width:425.40px;">What is the sum of 12.5 and 3.75?</div>
<div class="c" style="right:894.75px;top:470px;overflow:visible;transform:scaleX(0.95);transform-origin:right center;">15.25</div>
<div class="c" style="right:820.95px;top:470px;overflow:visible;transform:scaleX(0.95);transform-origin:right center;">16.25</div>
<div class="c" style="right:767.65px;top:470px;overflow:visible;transform:scaleX(0.95);transform-origin:right center;">15.5</div>
<div class="c" style="right:714.25px;top:470px;overflow:visible;transform:scaleX(0.95);transform-origin:right center;">16.5</div>
<div class="c" style="left:889.65px;top:470px;width:135.60px;">B</div>
<div class="c" style="right:522.75px;top:470px;overflow:visible;transform:scaleX(0.95);transform-origin:right center;">1</div>
<div class="c" style="left:31.50px;top:487px;width:50.75px;">Class 5</div>
<div class="c" style="left:84.85px;top:487px;width:110.70px;">Mathematics (501)</div>
<div class="c" style="left:198.15px;top:487px;width:425.40px;">Multiply 2.5 by 4.</div>
<div class="c" style="right:894.75px;top:487px;overflow:visible;transform:scaleX(0.95);transform-origin:right center;">1</div>
<div class="c" style="right:820.95px;top:487px;overflow:visible;transform:scaleX(0.95);transform-origin:right center;">100</div>
<div class="c" style="right:767.65px;top:487px;overflow:visible;transform:scaleX(0.95);transform-origin:right center;">10</div>
<div class="c" style="right:714.25px;top:487px;overflow:visible;transform:scaleX(0.95);transform-origin:right center;">0.1</div>
<div class="c" style="left:889.65px;top:487px;width:135.60px;">C</div>
<div class="c" style="right:522.75px;top:487px;overflow:visible;transform:scaleX(0.95);transform-origin:right center;">1</div>
<div class="c" style="left:31.50px;top:503px;width:50.75px;">Class 5</div>
<div class="c" style="left:84.85px;top:503px;width:110.70px;">Mathematics (501)</div>
<div class="c" style="left:198.15px;top:503px;width:425.40px;">Divide 15.5 by 5.</div>
<div class="c" style="right:894.75px;top:503px;overflow:visible;transform:scaleX(0.95);transform-origin:right center;">3.01</div>
<div class="c" style="right:820.95px;top:503px;overflow:visible;transform:scaleX(0.95);transform-origin:right center;">3.1</div>
<div class="c" style="right:767.65px;top:503px;overflow:visible;transform:scaleX(0.95);transform-origin:right center;">31</div>
<div class="c" style="right:714.25px;top:503px;overflow:visible;transform:scaleX(0.95);transform-origin:right center;">0.31</div>
<div class="c" style="left:889.65px;top:503px;width:135.60px;">B</div>
<div class="c" style="right:522.75px;top:503px;overflow:visible;transform:scaleX(0.95);transform-origin:right center;">1</div>
<div class="c" style="left:31.50px;top:520px;width:50.75px;">Class 5</div>
<div class="c" style="left:84.85px;top:520px;width:110.70px;">Mathematics (501)</div>
<div class="c" style="left:198.15px;top:520px;width:425.40px;">Convert 3/4 into a percentage.</div>
<div class="c" style="right:894.75px;top:520px;overflow:visible;transform:scaleX(0.95);transform-origin:right center;">25%</div>
<div class="c" style="right:820.95px;top:520px;overflow:visible;transform:scaleX(0.95);transform-origin:right center;">50%</div>
<div class="c" style="right:767.65px;top:520px;overflow:visible;transform:scaleX(0.95);transform-origin:right center;">75%</div>
<div class="c" style="right:714.25px;top:520px;overflow:visible;transform:scaleX(0.95);transform-origin:right center;">80%</div>
<div class="c" style="left:889.65px;top:520px;width:135.60px;">C</div>
<div class="c" style="right:522.75px;top:520px;overflow:visible;transform:scaleX(0.95);transform-origin:right center;">1</div>
<div class="c" style="left:31.50px;top:537px;width:50.75px;">Class 5</div>
<div class="c" style="left:84.85px;top:537px;width:110.70px;">Mathematics (501)</div>
<div class="c" style="left:198.15px;top:537px;width:425.40px;">What is 50% of 200?</div>
<div class="c" style="right:894.75px;top:537px;overflow:visible;transform:scaleX(0.95);transform-origin:right center;">25</div>
<div class="c" style="right:820.95px;top:537px;overflow:visible;transform:scaleX(0.95);transform-origin:right center;">50</div>
<div class="c" style="right:767.65px;top:537px;overflow:visible;transform:scaleX(0.95);transform-origin:right center;">100</div>
<div class="c" style="right:714.25px;top:537px;overflow:visible;transform:scaleX(0.95);transform-origin:right center;">150</div>
<div class="c" style="left:889.65px;top:537px;width:135.60px;">C</div>
<div class="c" style="right:522.75px;top:537px;overflow:visible;transform:scaleX(0.95);transform-origin:right center;">1</div>
<div class="c" style="left:31.50px;top:553px;width:50.75px;">Class 5</div>
<div class="c" style="left:84.85px;top:553px;width:110.70px;">Mathematics (501)</div>
<div class="c" style="left:198.15px;top:553px;width:425.40px;">An angle that measures exactly 90 degrees is called a/an ________ angle.</div>
<div class="c" style="left:626.15px;top:553px;width:80.40px;">Acute</div>
<div class="c" style="left:709.15px;top:553px;width:71.20px;">Obtuse</div>
<div class="c" style="left:782.95px;top:553px;width:50.70px;">Right</div>
<div class="c" style="left:836.25px;top:553px;width:50.80px;">Straight</div>
<div class="c" style="left:889.65px;top:553px;width:135.60px;">C</div>
<div class="c" style="right:522.75px;top:553px;overflow:visible;transform:scaleX(0.95);transform-origin:right center;">1</div>
<div class="c" style="left:31.50px;top:570px;width:50.75px;">Class 5</div>
<div class="c" style="left:84.85px;top:570px;width:110.70px;">Mathematics (501)</div>
<div class="c" style="left:198.15px;top:570px;width:425.40px;">How many sides does a hexagon have?</div>
<div class="c" style="right:894.75px;top:570px;overflow:visible;transform:scaleX(0.95);transform-origin:right center;">5</div>
<div class="c" style="right:820.95px;top:570px;overflow:visible;transform:scaleX(0.95);transform-origin:right center;">6</div>
<div class="c" style="right:767.65px;top:570px;overflow:visible;transform:scaleX(0.95);transform-origin:right center;">7</div>
<div class="c" style="right:714.25px;top:570px;overflow:visible;transform:scaleX(0.95);transform-origin:right center;">8</div>
<div class="c" style="left:889.65px;top:570px;width:135.60px;">B</div>
<div class="c" style="right:522.75px;top:570px;overflow:visible;transform:scaleX(0.95);transform-origin:right center;">1</div>
<div class="c" style="left:31.50px;top:587px;width:50.75px;">Class 5</div>
<div class="c" style="left:84.85px;top:587px;width:110.70px;">Mathematics (501)</div>
<div class="c" style="left:198.15px;top:587px;width:425.40px;">A triangle with all three sides equal is called?</div>
<div class="c" style="left:626.15px;top:587px;width:80.40px;">Isosceles</div>
<div class="c" style="left:709.15px;top:587px;width:71.20px;">Scalene</div>
<div class="c" style="left:782.95px;top:587px;width:50.70px;">Equilateral</div>
<div class="c" style="left:836.25px;top:587px;width:50.80px;">Right-angled</div>
<div class="c" style="left:889.65px;top:587px;width:135.60px;">C</div>
<div class="c" style="right:522.75px;top:587px;overflow:visible;transform:scaleX(0.95);transform-origin:right center;">1</div>
<div class="c" style="left:31.50px;top:603px;width:50.75px;">Class 5</div>
<div class="c" style="left:84.85px;top:603px;width:110.70px;">Mathematics (501)</div>
<div class="c" style="left:198.15px;top:603px;width:425.40px;">What is the line that divides a circle into two equal halves called?</div>
<div class="c" style="left:626.15px;top:603px;width:80.40px;">Radius</div>
<div class="c" style="left:709.15px;top:603px;width:71.20px;">Chord</div>
<div class="c" style="left:782.95px;top:603px;width:50.70px;">Diameter</div>
<div class="c" style="left:836.25px;top:603px;width:50.80px;">Arc</div>
<div class="c" style="left:889.65px;top:603px;width:135.60px;">C</div>
<div class="c" style="right:522.75px;top:603px;overflow:visible;transform:scaleX(0.95);transform-origin:right center;">1</div>
<div class="c" style="left:31.50px;top:620px;width:50.75px;">Class 5</div>
<div class="c" style="left:84.85px;top:620px;width:110.70px;">Mathematics (501)</div>
<div class="c" style="left:198.15px;top:620px;width:425.40px;">How many millimeters are in 5 centimeters?</div>
<div class="c" style="right:894.75px;top:620px;overflow:visible;transform:scaleX(0.95);transform-origin:right center;">5</div>
<div class="c" style="right:820.95px;top:620px;overflow:visible;transform:scaleX(0.95);transform-origin:right center;">50</div>
<div class="c" style="right:767.65px;top:620px;overflow:visible;transform:scaleX(0.95);transform-origin:right center;">500</div>
<div class="c" style="right:714.25px;top:620px;overflow:visible;transform:scaleX(0.95);transform-origin:right center;">0.5</div>
<div class="c" style="left:889.65px;top:620px;width:135.60px;">B</div>
<div class="c" style="right:522.75px;top:620px;overflow:visible;transform:scaleX(0.95);transform-origin:right center;">1</div>
<div class="c" style="left:31.50px;top:637px;width:50.75px;">Class 5</div>
<div class="c" style="left:84.85px;top:637px;width:110.70px;">Mathematics (501)</div>
<div class="c" style="left:198.15px;top:637px;width:425.40px;">If a movie starts at 6:30 PM and ends at 8:45 PM, what is its duration?</div>
<div class="c" style="left:626.15px;top:637px;width:80.40px;">2 hours 15 minutes</div>
<div class="c" style="left:709.15px;top:637px;width:71.20px;">2 hours 30 minutes</div>
<div class="c" style="left:782.95px;top:637px;width:50.70px;">1 hour 45 minutes</div>
<div class="c" style="left:836.25px;top:637px;width:50.80px;">2 hours</div>
<div class="c" style="left:889.65px;top:637px;width:135.60px;">A</div>
<div class="c" style="right:522.75px;top:637px;overflow:visible;transform:scaleX(0.95);transform-origin:right center;">1</div>
<div class="c" style="left:31.50px;top:653px;width:50.75px;">Class 5</div>
<div class="c" style="left:84.85px;top:653px;width:110.70px;">Mathematics (501)</div>
<div class="c" style="left:198.15px;top:653px;width:425.40px;">Convert 3.5 kilograms into grams.</div>
<div class="c" style="left:626.15px;top:653px;width:80.40px;">35 grams</div>
<div class="c" style="left:709.15px;top:653px;width:71.20px;">350 grams</div>
<div class="c" style="left:782.95px;top:653px;width:50.70px;">3500 grams</div>
<div class="c" style="left:836.25px;top:653px;width:50.80px;">305 grams</div>
<div class="c" style="left:889.65px;top:653px;width:135.60px;">C</div>
<div class="c" style="right:522.75px;top:653px;overflow:visible;transform:scaleX(0.95);transform-origin:right center;">1</div>
<div class="c" style="left:31.50px;top:670px;width:50.75px;">Class 5</div>
<div class="c" style="left:84.85px;top:670px;width:110.70px;">Mathematics (501)</div>
<div class="c" style="left:198.15px;top:670px;width:425.40px;">How many hours are there in 3 days?</div>
<div class="c" style="right:894.75px;top:670px;overflow:visible;transform:scaleX(0.95);transform-origin:right center;">24</div>
<div class="c" style="right:820.95px;top:670px;overflow:visible;transform:scaleX(0.95);transform-origin:right center;">48</div>
<div class="c" style="right:767.65px;top:670px;overflow:visible;transform:scaleX(0.95);transform-origin:right center;">72</div>
<div class="c" style="right:714.25px;top:670px;overflow:visible;transform:scaleX(0.95);transform-origin:right center;">96</div>
<div class="c" style="left:889.65px;top:670px;width:135.60px;">C</div>
<div class="c" style="right:522.75px;top:670px;overflow:visible;transform:scaleX(0.95);transform-origin:right center;">1</div>
<div class="c" style="left:31.50px;top:687px;width:50.75px;">Class 5</div>
<div class="c" style="left:84.85px;top:687px;width:110.70px;">Mathematics (501)</div>
<div class="c" style="left:198.15px;top:687px;width:425.40px;">What is the perimeter of a rectangle with length 10 cm and width 5 cm?</div>
<div class="c" style="left:626.15px;top:687px;width:80.40px;">15 cm</div>
<div class="c" style="left:709.15px;top:687px;width:71.20px;">30 cm</div>
<div class="c" style="left:782.95px;top:687px;width:50.70px;">50 cm</div>
<div class="c" style="left:836.25px;top:687px;width:50.80px;">25 cm</div>
<div class="c" style="left:889.65px;top:687px;width:135.60px;">B</div>
<div class="c" style="right:522.75px;top:687px;overflow:visible;transform:scaleX(0.95);transform-origin:right center;">1</div>
<div class="c" style="left:31.50px;top:703px;width:50.75px;">Class 5</div>
<div class="c" style="left:84.85px;top:703px;width:110.70px;">Mathematics (501)</div>
<div class="c" style="left:198.15px;top:703px;width:425.40px;">What is the area of a square with a side of 6 cm?</div>
<div class="c" style="left:626.15px;top:703px;width:80.40px;">24 cmÂ²</div>
<div class="c" style="left:709.15px;top:703px;width:71.20px;">36 cm</div>
<div class="c" style="left:782.95px;top:703px;width:50.70px;">36 cmÂ²</div>
<div class="c" style="left:836.25px;top:703px;width:50.80px;">12 cmÂ²</div>
<div class="c" style="left:889.65px;top:703px;width:135.60px;">C</div>
<div class="c" style="right:522.75px;top:703px;overflow:visible;transform:scaleX(0.95);transform-origin:right center;">1</div>
<div class="c" style="left:31.50px;top:720px;width:50.75px;">Class 5</div>
<div class="c" style="left:84.85px;top:720px;width:110.70px;">Mathematics (501)</div>
<div class="c" style="left:198.15px;top:720px;width:425.40px;">Calculate the volume of a cube with an edge of 4 cm.</div>
<div class="c" style="left:626.15px;top:720px;width:80.40px;">12 cmÂ³</div>
<div class="c" style="left:709.15px;top:720px;width:71.20px;">16 cmÂ³</div>
<div class="c" style="left:782.95px;top:720px;width:50.70px;">48 cmÂ³</div>
<div class="c" style="left:836.25px;top:720px;width:50.80px;">64 cmÂ³</div>
<div class="c" style="left:889.65px;top:720px;width:135.60px;">D</div>
<div class="c" style="right:522.75px;top:720px;overflow:visible;transform:scaleX(0.95);transform-origin:right center;">1</div>
<div class="c" style="left:31.50px;top:737px;width:50.75px;">Class 5</div>
<div class="c" style="left:84.85px;top:737px;width:110.70px;">Mathematics (501)</div>
<div class="c" style="left:198.15px;top:737px;width:425.40px;">If a bat costs â‚¹500 and is sold for â‚¹550, what is the profit?</div>
<div class="c" style="left:626.15px;top:737px;width:80.40px;">â‚¹50</div>
<div class="c" style="left:709.15px;top:737px;width:71.20px;">â‚¹100</div>
<div class="c" style="left:782.95px;top:737px;width:50.70px;">â‚¹550</div>
<div class="c" style="left:836.25px;top:737px;width:50.80px;">â‚¹1050</div>
<div class="c" style="left:889.65px;top:737px;width:135.60px;">A</div>
<div class="c" style="right:522.75px;top:737px;overflow:visible;transform:scaleX(0.95);transform-origin:right center;">1</div>
<div class="c" style="left:31.50px;top:753px;width:50.75px;">Class 5</div>
<div class="c" style="left:84.85px;top:753px;width:110.70px;">Mathematics (501)</div>
<div class="c" style="left:198.15px;top:753px;width:425.40px;">If 5 pens cost â‚¹50, what is the cost of 1 pen?</div>
<div class="c" style="left:626.15px;top:753px;width:80.40px;">â‚¹5</div>
<div class="c" style="left:709.15px;top:753px;width:71.20px;">â‚¹10</div>
<div class="c" style="left:782.95px;top:753px;width:50.70px;">â‚¹25</div>
<div class="c" style="left:836.25px;top:753px;width:50.80px;">â‚¹50</div>
<div class="c" style="left:889.65px;top:753px;width:135.60px;">B</div>
<div class="c" style="right:522.75px;top:753px;overflow:visible;transform:scaleX(0.95);transform-origin:right center;">1</div>
<div class="a" style="left:15.60px;top:158.30px;width:84.00px;height:21.60px;background:#fff;border:1px solid #e0e0e0;border-radius:4.5px;"></div>
<div class="t " style="left:21.00px;top:162.00px;font-size:10.6px;line-height:14px;color:#222;transform:scaleX(0.8793);transform-origin:left center;">A1</div>
<svg class="a" style="left:86.40px;top:167.60px;" width="9" height="6" viewBox="0 0 9 6" fill="none"><path d="M0.6 0.6L4.4 4.4L8.2 0.6" stroke="#333" stroke-width="1.25"/></svg>
<div class="a" style="left:107.60px;top:165.20px;width:1.90px;height:1.90px;background:#333;border-radius:50%;"></div>
<div class="a" style="left:107.60px;top:168.60px;width:1.90px;height:1.90px;background:#333;border-radius:50%;"></div>
<div class="a" style="left:107.60px;top:172.00px;width:1.90px;height:1.90px;background:#333;border-radius:50%;"></div>
<div class="a" style="left:117.40px;top:158.30px;width:70.40px;height:21.60px;background:#fff;border:1px solid #e0e0e0;border-radius:4.5px;"></div>
<svg class="a" style="left:122.40px;top:164.00px;" width="10" height="10" viewBox="0 0 10 10" fill="none"><path d="M0.6 0.6L9.2 9.2M9.2 0.6L0.6 9.2" stroke="#b3b3b3" stroke-width="1.1"/></svg>
<svg class="a" style="left:140.60px;top:164.00px;" width="13" height="10" viewBox="0 0 13 10" fill="none"><path d="M0.6 5.2L4.2 8.8L12.2 0.8" stroke="#b3b3b3" stroke-width="1.1"/></svg>
<div class="t" style="left:161.6px;top:160.4px;font-size:13.6px;line-height:16px;color:#222;font-family:'Liberation Serif',serif;font-style:italic;font-weight:700;">fx</div>
<svg class="a" style="left:178.60px;top:167.60px;" width="9" height="6" viewBox="0 0 9 6" fill="none"><path d="M0.6 0.6L4.2 4.2L7.8 0.6" stroke="#555" stroke-width="1.1"/></svg>
<div class="a" style="left:192.80px;top:158.30px;width:1394.40px;height:21.60px;background:#fff;border:1px solid #e0e0e0;border-radius:4.5px;"></div>
<div class="t " style="left:201.00px;top:162.00px;font-size:11.5px;line-height:14px;color:#222;transform:scaleX(1.0177);transform-origin:left center;">class_name*</div>
<svg class="a" style="left:1575.00px;top:165.40px;" width="10" height="6" viewBox="0 0 10 6" fill="none"><path d="M0.6 0.6L4.6 4.6L8.6 0.6" stroke="#333" stroke-width="1.25"/></svg>
<div class="a" style="left:1578.40px;top:185.60px;width:14.00px;height:627.00px;background:#f7f7f7;border-radius:7px;"></div>
<svg class="a" style="left:1582.00px;top:189.40px;" width="8" height="6" viewBox="0 0 8 6" fill="none"><path d="M0 5.4L3.7 0.2L7.4 5.4Z" fill="#858585"/></svg>
<div class="a" style="left:1582.00px;top:199.40px;width:7.40px;height:587.00px;background:#767676;border-radius:3.7px;"></div>
<svg class="a" style="left:1582.00px;top:800.60px;" width="8" height="6" viewBox="0 0 8 6" fill="none"><path d="M0 0.2L3.7 5.4L7.4 0.2Z" fill="#858585"/></svg>
<div class="a" style="left:8.00px;top:809.00px;width:1586.00px;height:26.40px;background:#f0f0f0;"></div>
<div class="a" style="left:105.00px;top:809.00px;width:117.00px;height:23.00px;background:#fff;border-radius:0 0 5px 5px;"></div>
<svg class="a" style="left:31.60px;top:817.60px;" width="6" height="9" viewBox="0 0 6 9" fill="none"><path d="M5 0.5L0.8 4.5L5 8.5" stroke="#9a9a9a" stroke-width="1.1"/></svg>
<svg class="a" style="left:58.80px;top:817.60px;" width="6" height="9" viewBox="0 0 6 9" fill="none"><path d="M0.8 0.5L5 4.5L0.8 8.5" stroke="#9a9a9a" stroke-width="1.1"/></svg>
<div class="t " style="left:112.00px;top:813.00px;font-size:11.6px;line-height:14px;color:#1f1f1f;transform:scaleX(1.0415);transform-origin:left center;-webkit-text-stroke:0.55px;">qna-5th-class-math</div>
<div class="a" style="left:112.00px;top:827.80px;width:103.40px;height:2.20px;background:#107c41;border-radius:1px;"></div>
<div class="a" style="left:225.00px;top:815.00px;width:1.00px;height:14.00px;background:#c8c8c8;"></div>
<svg class="a" style="left:260.60px;top:816.80px;" width="10" height="10" viewBox="0 0 10 10" fill="none"><path d="M4.8 0.4V9.4M0.3 4.9H9.3" stroke="#333" stroke-width="1.1"/></svg>
<div class="a" style="left:961.20px;top:818.80px;width:1.40px;height:1.40px;background:#333;border-radius:50%;"></div>
<div class="a" style="left:961.20px;top:822.00px;width:1.40px;height:1.40px;background:#333;border-radius:50%;"></div>
<div class="a" style="left:961.20px;top:825.20px;width:1.40px;height:1.40px;background:#333;border-radius:50%;"></div>
<div class="a" style="left:976.00px;top:814.60px;width:603.00px;height:14.60px;background:#f7f7f7;border-radius:7.3px;"></div>
<svg class="a" style="left:979.60px;top:818.00px;" width="6" height="8" viewBox="0 0 6 8" fill="none"><path d="M5.6 0L0.2 3.8L5.6 7.6Z" fill="#858585"/></svg>
<div class="a" style="left:989.60px;top:818.20px;width:560.60px;height:7.40px;background:#767676;border-radius:3.7px;"></div>
<svg class="a" style="left:1568.20px;top:818.00px;" width="6" height="8" viewBox="0 0 6 8" fill="none"><path d="M0.2 0L5.6 3.8L0.2 7.6Z" fill="#858585"/></svg>
<div class="a" style="left:7.70px;top:835.40px;width:1586.80px;height:19.40px;background:#f5f5f5;border-radius:0 0 7px 7px;border-top:1px solid #fafafa;"></div>
<div class="t " style="left:17.80px;top:839.00px;font-size:9.9px;line-height:13px;color:#333;transform:scaleX(0.8946);transform-origin:left center;">Ready</div>
<svg class="a" style="left:59.60px;top:838.60px;" width="13" height="13" viewBox="0 0 13 13" fill="none"><circle cx="5.6" cy="1.9" r="1.4" stroke="#333" stroke-width="0.9"/>
<path d="M0.6 3.6Q5.6 5.6 10.6 3.6M3.8 4.8V8.2L2.6 12M7.4 4.8V7" stroke="#333" stroke-width="1" stroke-linecap="round"/>
<path d="M5.8 7.6L7.2 12.2L8 10.2L9.8 10.6Z" fill="#333"/>
<text x="8.4" y="12.6" font-size="7" font-family="Liberation Sans, sans-serif" fill="#333">?</text></svg>
<div class="t " style="left:75.00px;top:838.00px;font-size:9.9px;line-height:13px;color:#333;transform:scaleX(0.9501);transform-origin:left center;">Accessibility: Unavailable</div>
<div class="a" style="left:1335.00px;top:836.60px;width:33.00px;height:17.40px;background:#dedede;"></div>
<svg class="a" style="left:1345.40px;top:839.40px;" width="12" height="12" viewBox="0 0 12 12" fill="none"><path d="M0.6 0.6H10.8V10.8H0.6ZM4 0.6V10.8M7.4 0.6V10.8M0.6 4H10.8M0.6 7.4H10.8" stroke="#333" stroke-width="1"/></svg>
<svg class="a" style="left:1378.80px;top:839.40px;" width="12" height="12" viewBox="0 0 12 12" fill="none"><rect x="0.6" y="0.6" width="10.6" height="10.2" stroke="#333" stroke-width="1"/><rect x="3" y="2.6" width="5.8" height="6.2" stroke="#333" stroke-width="0.9"/><path d="M4.4 4.4H7.4M4.4 6.8H7.4" stroke="#333" stroke-width="0.8"/></svg>
<svg class="a" style="left:1412.00px;top:839.00px;" width="12" height="12" viewBox="0 0 12 12" fill="none"><path d="M0.6 0.6H11V10.6H0.6ZM3.6 0.6V6.4H8V0.6" stroke="#333" stroke-width="1"/></svg>
<div class="a" style="left:1439.60px;top:844.40px;width:6.60px;height:1.00px;background:#444;"></div>
<div class="a" style="left:1451.00px;top:844.60px;width:83.00px;height:1.00px;background:#888;"></div>
<div class="a" style="left:1490.60px;top:840.00px;width:3.60px;height:10.00px;background:#555;"></div>
<svg class="a" style="left:1537.60px;top:841.00px;" width="8" height="8" viewBox="0 0 8 8" fill="none"><path d="M3.6 0.2V7M0.2 3.6H7" stroke="#444" stroke-width="1"/></svg>
<div class="t " style="left:1556.40px;top:838.00px;font-size:9.8px;line-height:13px;color:#333;transform:scaleX(0.8698);transform-origin:left center;">100%</div>
<div class="a" style="left:0.00px;top:860.00px;width:1600.00px;height:40.00px;background:#1c1c1c;border-top:1px solid #2c2c2c;"></div>
<div class="a" style="left:17.60px;top:871.40px;width:9.20px;height:9.20px;background:linear-gradient(135deg,#6fd8ff,#1fa3f0);border-radius:1px;"></div>
<div class="a" style="left:27.80px;top:871.40px;width:9.20px;height:9.20px;background:linear-gradient(135deg,#6fd8ff,#1fa3f0);border-radius:1px;"></div>
<div class="a" style="left:17.60px;top:881.40px;width:9.20px;height:9.20px;background:linear-gradient(135deg,#6fd8ff,#1fa3f0);border-radius:1px;"></div>
<div class="a" style="left:27.80px;top:881.40px;width:9.20px;height:9.20px;background:linear-gradient(135deg,#6fd8ff,#1fa3f0);border-radius:1px;"></div>
<div class="a" style="left:48.00px;top:867.60px;width:183.00px;height:26.00px;background:#3a3a3a;border-radius:13px;border:1px solid #474747;"></div>
<svg class="a" style="left:57.00px;top:874.00px;" width="13" height="13" viewBox="0 0 13 13" fill="none"><circle cx="5.4" cy="5.4" r="4.4" stroke="#fff" stroke-width="1.3"/><path d="M8.6 8.6L12 12" stroke="#fff" stroke-width="1.4" stroke-linecap="round"/></svg>
<div class="t " style="left:78.40px;top:874.00px;font-size:11.4px;line-height:14px;color:#e6e6e6;transform:scaleX(0.9413);transform-origin:left center;-webkit-text-stroke:0.2px #e6e6e6;">Search</div>
<svg class="a" style="left:186.00px;top:870.00px;" width="42" height="22" viewBox="0 0 42 22" fill="none"><ellipse cx="21" cy="19.4" rx="16" ry="1.8" fill="#8a7f7f"/>
<rect x="2" y="5.6" width="10.6" height="7.6" rx="1.4" fill="#d9d9d9" transform="rotate(-8 7 9)"/><circle cx="7.4" cy="9.4" r="2.3" fill="#666"/>
<rect x="14" y="8.8" width="8.6" height="11" rx="1.2" fill="#f09a9a"/><path d="M16.4 8.6V6.4H20.2V8.6" stroke="#ccc" stroke-width="0.9"/>
<rect x="21.8" y="6.4" width="7.6" height="13" rx="1.2" fill="#4fc4a6"/><path d="M23.6 6.2V2.8H27.4V6.2" stroke="#ccc" stroke-width="0.9"/>
<ellipse cx="35" cy="9.2" rx="5.6" ry="3" fill="#e5b95a"/><ellipse cx="35" cy="7.6" rx="3" ry="2.4" fill="#f0cd7c"/></svg>
<svg class="a" style="left:242.60px;top:871.00px;" width="20" height="20" viewBox="0 0 20 20" fill="none"><path d="M2 1.6H9.4V17.6L2 15.6Z" fill="#f3c94b"/><path d="M2 1.6L4.6 3.4V17.6L2 15.6Z" fill="#d9a730"/><path d="M7.6 17.2Q5 17.2 5.4 14.8Q5.8 13 7.8 13.2Q8.8 10.6 11.6 11.2Q13.6 9.8 15.4 12Q18.4 12.4 17.8 15.4Q17.4 17.2 15.4 17.2Z" fill="#1b8fe8"/></svg>
<svg class="a" style="left:277.00px;top:870.60px;" width="22" height="20" viewBox="0 0 22 20" fill="none"><path d="M1 2.2Q1 1 2.2 1H7.4L9.6 3.2H19.4Q20.6 3.2 20.6 4.4V6H1Z" fill="#e8a21c"/><rect x="1" y="4.6" width="19.6" height="14" rx="1.4" fill="#ffd24a"/><rect x="6" y="12.6" width="9.6" height="6" rx="1" fill="#1a7fd4"/><rect x="8" y="14.4" width="5.6" height="1.3" fill="#0f5ea6"/></svg>
<div class="a" style="left:285.70px;top:894.20px;width:4.60px;height:2.20px;background:#9a9a9a;border-radius:1.1px;"></div>
<svg class="a" style="left:314.00px;top:870.60px;" width="21" height="21" viewBox="0 0 21 21" fill="none"><rect x="1.6" y="1.6" width="17" height="17" fill="#3f3b35"/><rect x="1.6" y="1.6" width="8" height="7" fill="#8d887c" opacity="0.7"/><rect x="10" y="9" width="8.6" height="9.6" fill="#6b665e" opacity="0.7"/><rect x="6.4" y="6.6" width="7.6" height="7.6" fill="#ffffff"/></svg>
<svg class="a" style="left:351.00px;top:870.60px;" width="21" height="21" viewBox="0 0 21 21" fill="none"><path d="M10.4 1L19 5.8V15.2L10.4 20L1.8 15.2V5.8Z" fill="#5b6670"/><path d="M10.4 4.4L15.6 13.6H5.2Z" fill="#cfd6dc"/><path d="M10.4 4.4V20L1.8 15.2Z" fill="#3c454d" opacity="0.6"/></svg>
<svg class="a" style="left:387.00px;top:866.60px;" width="27" height="26" viewBox="0 0 27 26" fill="none"><path d="M11 5.6A8.6 8.6 0 1 1 6.6 21.4L2.2 22.8L3.6 18.6A8.6 8.6 0 0 1 11 5.6Z" fill="#1c1c1c" stroke="#25d366" stroke-width="1.9" stroke-linejoin="round"/><path d="M7.4 10.6Q8.4 9.4 9.2 10.6L9.8 12Q9.6 12.8 9 13.2Q10.2 15.6 12.6 16.6Q13.2 15.6 14 15.8L15.4 16.6Q16 17.6 14.8 18.4Q12.2 19.6 9 16.4Q6 13 7.4 10.6Z" fill="#25d366"/><circle cx="19.2" cy="7.4" r="6.9" fill="#4cc2ff"/><text x="19.2" y="10.4" font-size="8.4" text-anchor="middle" font-family="Liberation Sans, sans-serif" fill="#0a0a0a">19</text></svg>
<svg class="a" style="left:424.00px;top:870.60px;" width="21" height="21" viewBox="0 0 21 21" fill="none"><g transform="translate(0.4,0.2) scale(1.0)"><circle cx="10" cy="10" r="9.6" fill="#fff"/><path d="M10 10L1.7 5.2A9.6 9.6 0 0 1 18.3 5.2Z" fill="#ea4335"/><path d="M10 10L18.3 5.2A9.6 9.6 0 0 1 10 19.6Z" fill="#fbbc04"/><path d="M10 10L10 19.6A9.6 9.6 0 0 1 1.7 5.2Z" fill="#34a853"/><circle cx="10" cy="10" r="4.5" fill="#fff"/><circle cx="10" cy="10" r="3.5" fill="#4285f4"/></g></svg>
<div class="a" style="left:431.70px;top:894.20px;width:4.60px;height:2.20px;background:#9a9a9a;border-radius:1.1px;"></div>
<svg class="a" style="left:461.00px;top:870.60px;" width="21" height="21" viewBox="0 0 21 21" fill="none"><defs><linearGradient id="eg" x1="0" y1="0" x2="1" y2="1"><stop offset="0" stop-color="#35c1f1"/><stop offset="0.6" stop-color="#1a73d8"/><stop offset="1" stop-color="#0c59a4"/></linearGradient></defs><circle cx="10.2" cy="10.2" r="9.6" fill="url(#eg)"/><path d="M8 1.4Q16 0 19.4 7.4Q20.2 12.4 14.6 12.4Q16 8 10.6 7Q6.4 7.2 5.4 10.4Q5.4 4 8 1.4Z" fill="#4fe08a" opacity="0.9"/><path d="M5.6 12.6Q6.6 17.6 12.6 18.4Q16 18 17.6 15.6Q14 17 10.6 15.4Q7.4 13.4 8.6 10Q5.8 10.4 5.6 12.6Z" fill="#0c59a4"/></svg>
<svg class="a" style="left:497.50px;top:870.00px;" width="21" height="22" viewBox="0 0 21 22" fill="none"><circle cx="10.2" cy="11.6" r="9.2" fill="#ff9a1f"/><path d="M3 5Q6 1 9 3Q12 0 13.6 3.4Q19.4 6 19.4 11.8Q18 6.8 13.6 7.4Q9 4.6 5.6 8.4Z" fill="#ffcb3a"/><path d="M1.2 12Q2 19.8 10.2 20.8Q16.6 20.4 19 15Q14 19 8.4 16.4Q3 13 5.6 8.4Q2 8.6 1.2 12Z" fill="#ff3d4f"/><circle cx="9.8" cy="11.4" r="3.9" fill="#7542e5"/><path d="M13 1.2Q15.8 3 16 6.4Q14.6 5 12.6 5Z" fill="#ffdd4a"/></svg>
<div class="a" style="left:505.30px;top:894.20px;width:4.60px;height:2.20px;background:#9a9a9a;border-radius:1.1px;"></div>
<svg class="a" style="left:534.60px;top:870.20px;" width="20" height="22" viewBox="0 0 20 22" fill="none"><path d="M10 0.6L13.2 1.6L15.4 1L18 4L17.2 6L18.6 8.6L15.6 17L10 21.2L4.4 17L1.4 8.6L2.8 6L2 4L4.6 1L6.8 1.6Z" fill="#fb542b"/><path d="M10 4.6L13.6 5.6L15 8.6L12.6 11.4L13.4 14L10 16.6L6.6 14L7.4 11.4L5 8.6L6.4 5.6Z" fill="#fff"/><path d="M10 8L11.8 9.6L10 13L8.2 9.6Z" fill="#fb542b"/></svg>
<svg class="a" style="left:571.00px;top:870.60px;" width="21" height="21" viewBox="0 0 21 21" fill="none"><ellipse cx="10.2" cy="10.4" rx="9.6" ry="9.8" fill="#e0121c"/><ellipse cx="10.2" cy="10.4" rx="4" ry="7" fill="#1c1c1c"/></svg>
<svg class="a" style="left:607.60px;top:870.60px;" width="21" height="21" viewBox="0 0 21 21" fill="none"><circle cx="10.2" cy="10.4" r="9.6" fill="#8a2be2"/><path d="M10.2 2.8A7.6 7.6 0 0 1 10.2 18" stroke="#e9d2ff" stroke-width="1.3"/><path d="M10.2 5.6A4.8 4.8 0 0 1 10.2 15.2" stroke="#e9d2ff" stroke-width="1.3"/><path d="M10.2 8.2A2.2 2.2 0 0 1 10.2 12.6" stroke="#e9d2ff" stroke-width="1.3"/></svg>
<svg class="a" style="left:643.60px;top:870.60px;" width="22" height="21" viewBox="0 0 22 21" fill="none"><rect x="6" y="1" width="15" height="19" rx="1.4" fill="#2b7cd3"/><rect x="6" y="1" width="15" height="4.8" fill="#41a5ee"/><rect x="6" y="10.4" width="15" height="4.8" fill="#185abd"/><rect x="6" y="15.2" width="15" height="4.8" fill="#103f91"/><rect x="0.6" y="5" width="11.4" height="11.4" rx="1" fill="#185abd"/><text x="6.3" y="14" font-size="8.6" font-weight="700" text-anchor="middle" font-family="Liberation Sans, sans-serif" fill="#fff">W</text></svg>
<div class="a" style="left:651.90px;top:894.20px;width:4.60px;height:2.20px;background:#9a9a9a;border-radius:1.1px;"></div>
<svg class="a" style="left:680.60px;top:870.60px;" width="21" height="21" viewBox="0 0 21 21" fill="none"><circle cx="10.4" cy="10.4" r="9.8" fill="#fff"/><path d="M10.4 4L15.4 16.4H13L10.4 9.6L7.8 16.4H5.4Z" fill="#3b7ff5"/><path d="M5.6 12.6H15.2" stroke="#3b7ff5" stroke-width="1.4"/><circle cx="10.4" cy="4.4" r="1.6" fill="#2bb673"/></svg>
<svg class="a" style="left:717.60px;top:870.80px;" width="20" height="20" viewBox="0 0 20 20" fill="none"><rect x="0.4" y="0.4" width="19" height="19" fill="#21d789"/><rect x="0.4" y="0.4" width="19" height="19" fill="none" stroke="#fcf84a" stroke-width="1.6"/><rect x="2.6" y="2.6" width="14.6" height="14.6" fill="#111"/><text x="4" y="10.8" font-size="7.4" font-weight="700" font-family="Liberation Sans, sans-serif" fill="#fff">PC</text><rect x="4.2" y="13.8" width="5.4" height="1.2" fill="#fff"/></svg>
<svg class="a" style="left:754.00px;top:870.60px;" width="21" height="21" viewBox="0 0 21 21" fill="none"><path d="M10.4 1L19 5.4V15.4L10.4 20L1.8 15.4V5.4Z" fill="#8fb6e8"/><path d="M10.4 1L19 5.4L10.4 10L1.8 5.4Z" fill="#dcebfb"/><path d="M10.4 10V20L1.8 15.4V5.4Z" fill="#5f8fd0"/></svg>
<svg class="a" style="left:790.60px;top:870.60px;" width="21" height="21" viewBox="0 0 21 21" fill="none"><path d="M10.4 1L19 5.4V15.4L10.4 20L1.8 15.4V5.4Z" fill="#8bc34a"/><path d="M10.4 1L19 5.4L10.4 10L1.8 5.4Z" fill="#c94f7c"/><path d="M10.4 10V20L1.8 15.4V5.4Z" fill="#f0f0f0"/><path d="M10.4 10L19 5.4V15.4L10.4 20Z" fill="#4a90d9"/><path d="M5 7.6L10.4 10.4V16.4L5 13.6Z" fill="#e0c04a"/></svg>
<svg class="a" style="left:827.60px;top:870.60px;" width="21" height="21" viewBox="0 0 21 21" fill="none"><circle cx="10.4" cy="10.4" r="9.8" fill="#2f86e0"/><rect x="5" y="5.6" width="10.8" height="7.4" rx="0.8" fill="#d6e9fb"/><rect x="8.4" y="13" width="4" height="1.6" fill="#d6e9fb"/><rect x="6.6" y="14.6" width="7.6" height="1.2" fill="#d6e9fb"/></svg>
<svg class="a" style="left:864.00px;top:870.00px;" width="21" height="22" viewBox="0 0 21 22" fill="none"><rect x="1.6" y="2" width="14.6" height="19" fill="#e8e8e8"/><rect x="3" y="9" width="11.8" height="10.6" fill="#7bc043"/><path d="M3.4 5.6H14.4M3.4 7.4H11" stroke="#888" stroke-width="0.8"/><path d="M18.6 1.4L11.6 15.4L10.8 18L13 16.2L20 2.2Z" fill="#e8a33a"/><path d="M18.6 1.4L20 2.2L19.4 3.4L18 2.6Z" fill="#d94f4f"/></svg>
<div class="a" style="left:871.90px;top:894.20px;width:4.60px;height:2.20px;background:#9a9a9a;border-radius:1.1px;"></div>
<svg class="a" style="left:900.60px;top:870.40px;" width="21" height="21" viewBox="0 0 21 21" fill="none"><path d="M15 1L20 3.4V17.6L15 20L5.6 11.6L2.4 14.2L1 13.4V7.6L2.4 6.8L5.6 9.4Z" fill="#2a9df4"/><path d="M15 6.2L9 10.5L15 14.8Z" fill="#1c1c1c"/><path d="M15 1L20 3.4V17.6L15 20Z" fill="#1a7fd4"/></svg>
<div class="a" style="left:908.70px;top:894.20px;width:4.60px;height:2.20px;background:#9a9a9a;border-radius:1.1px;"></div>
<svg class="a" style="left:937.00px;top:870.40px;" width="22" height="22" viewBox="0 0 22 22" fill="none"><path d="M1 1H9L6.4 3.6L10 7.2L7.2 10L3.6 6.4L1 9Z" fill="#2a9df4"/><path d="M21 21H13L15.6 18.4L12 14.8L14.8 12L18.4 15.6L21 13Z" fill="#5bc236"/><rect x="6.6" y="9" width="9" height="7.4" rx="1" fill="#c9c9c9"/><path d="M8.4 9V7Q8.4 4.8 11.1 4.8Q13.8 4.8 13.8 7V9" stroke="#c9c9c9" stroke-width="1.5" fill="none"/></svg>
<svg class="a" style="left:974.00px;top:870.60px;" width="22" height="21" viewBox="0 0 22 21" fill="none"><rect x="9.6" y="1" width="9.6" height="7.6" fill="#c9c9c9"/><rect x="10.8" y="2.2" width="7.2" height="5" fill="#1f3fd0"/><rect x="1.6" y="9.6" width="9.6" height="7.6" fill="#c9c9c9"/><rect x="2.8" y="10.8" width="7.2" height="5" fill="#1f3fd0"/><rect x="0.6" y="17.6" width="11.6" height="1.8" fill="#c9c9c9"/><path d="M17 6.4L9.4 11L12 11.8L5.4 16.2" stroke="#f6e11e" stroke-width="1.7" fill="none"/></svg>
<svg class="a" style="left:1010.60px;top:870.00px;" width="22" height="22" viewBox="0 0 22 22" fill="none"><path d="M4.6 2.4Q10.6 -0.6 16.6 2.4Q20.6 5.4 18 11Q16.6 14.6 16 18.6Q15.6 21.4 12.8 21Q11 20.4 11.4 16H9.6Q9.6 19.4 7.4 19Q5 18.4 5.4 13.6Q1.6 9 4.6 2.4Z" fill="#336791"/><path d="M7.2 5.4Q10.6 3.6 14 5.4Q15.6 8.6 13.6 12.4H7.6Q5.6 8.6 7.2 5.4Z" fill="#6f9cc6" opacity="0.6"/></svg>
<svg class="a" style="left:1047.40px;top:870.60px;" width="24" height="21" viewBox="0 0 24 21" fill="none"><g transform="translate(0.4,0.6) scale(1.0)"><circle cx="10" cy="10" r="9.6" fill="#fff"/><path d="M10 10L1.7 5.2A9.6 9.6 0 0 1 18.3 5.2Z" fill="#ea4335"/><path d="M10 10L18.3 5.2A9.6 9.6 0 0 1 10 19.6Z" fill="#fbbc04"/><path d="M10 10L10 19.6A9.6 9.6 0 0 1 1.7 5.2Z" fill="#34a853"/><circle cx="10" cy="10" r="4.5" fill="#fff"/><circle cx="10" cy="10" r="3.5" fill="#4285f4"/></g><circle cx="17.6" cy="5" r="4.6" fill="#8e3fd0"/><text x="17.6" y="7.2" font-size="5.8" text-anchor="middle" font-family="Liberation Sans, sans-serif" fill="#fff">P</text></svg>
<div class="a" style="left:1055.30px;top:894.20px;width:4.60px;height:2.20px;background:#9a9a9a;border-radius:1.1px;"></div>
<svg class="a" style="left:1084.00px;top:870.60px;" width="21" height="21" viewBox="0 0 21 21" fill="none"><circle cx="10.4" cy="10.4" r="9.8" fill="#ff6c37"/><path d="M6 15.4L7 12.2L13.6 5.4Q15.4 4.6 16.2 6.4L9.4 13.6Z" fill="#fff"/><circle cx="15" cy="6" r="1.5" fill="#ff6c37" stroke="#fff" stroke-width="0.7"/></svg>
<div class="a" style="left:1091.90px;top:894.20px;width:4.60px;height:2.20px;background:#9a9a9a;border-radius:1.1px;"></div>
<svg class="a" style="left:1120.60px;top:872.00px;" width="24" height="22" viewBox="0 0 24 22" fill="none"><rect x="1.4" y="1.4" width="14" height="14" rx="2" fill="#f4f4f4"/><rect x="3.6" y="3.6" width="9.6" height="9.6" fill="none" stroke="#d13438" stroke-width="1.5" stroke-dasharray="1.8 1.4"/><circle cx="13" cy="18" r="1.9" stroke="#2a9df4" stroke-width="1.1" fill="none"/><circle cx="19.6" cy="13" r="1.9" stroke="#2a9df4" stroke-width="1.1" fill="none"/><path d="M10 10L18.4 11.4M10 10L11.8 16.6" stroke="#9a9a9a" stroke-width="1.1"/></svg>
<div class="a" style="left:1124.90px;top:894.20px;width:13.00px;height:2.20px;background:#9a9a9a;border-radius:1.1px;"></div>
<svg class="a" style="left:1157.60px;top:870.60px;" width="21" height="21" viewBox="0 0 21 21" fill="none"><rect x="0.6" y="0.6" width="19.6" height="19.6" rx="1" fill="#0f5bb5"/><rect x="2" y="2" width="16.8" height="4" fill="#fff"/><path d="M4 12.4H10.6V9L16.8 13.6L10.6 18.2V14.8H4Z" fill="#fff"/><path d="M2 18.8V7.6H5" stroke="#fff" stroke-width="1.2" fill="none"/></svg>
<div class="a" style="left:1165.50px;top:894.20px;width:4.60px;height:2.20px;background:#9a9a9a;border-radius:1.1px;"></div>
<svg class="a" style="left:1193.60px;top:870.60px;" width="22" height="21" viewBox="0 0 22 21" fill="none"><rect x="6" y="1" width="15" height="19" rx="1.4" fill="#21a366"/><rect x="13.4" y="1" width="7.6" height="4.8" fill="#33c481"/><rect x="6" y="5.8" width="7.4" height="4.8" fill="#107c41"/><rect x="6" y="10.4" width="7.4" height="4.8" fill="#185c37"/><rect x="13.4" y="10.4" width="7.6" height="4.8" fill="#107c41"/><rect x="6" y="15.2" width="15" height="4.8" fill="#185c37"/><rect x="0.6" y="5" width="11.4" height="11.4" rx="1" fill="#107c41"/><path d="M3.8 7.6L8.8 13.8M8.8 7.6L3.8 13.8" stroke="#fff" stroke-width="1.5"/></svg>
<div class="a" style="left:1202.10px;top:894.20px;width:4.60px;height:2.20px;background:#9a9a9a;border-radius:1.1px;"></div>
<svg class="a" style="left:1356.60px;top:866.00px;" width="28" height="26" viewBox="0 0 28 26" fill="none"><path d="M5.4 19.6Q1 19.6 1.4 15.8Q2 12.8 5.6 13Q7.6 8.4 12.6 9.4Q16.6 10.6 16.8 14Q20.4 14 20.2 17Q20 19.6 17 19.6Z" fill="#c9daf2"/><path d="M9 9.8Q12 7 15.4 9.4Q17.2 11.4 16.8 14Q13 11 9 9.8Z" fill="#8fb2e6"/><circle cx="14.6" cy="21.4" r="2.4" fill="#1a73e8"/><path d="M13 20L14.6 16.4L16.2 20Z" fill="#1a73e8"/><rect x="8.6" y="0.6" width="18.4" height="11.6" rx="5.8" fill="#2b2b2b"/><text x="17.6" y="9.4" font-size="8.8" text-anchor="middle" font-family="Liberation Sans, sans-serif" fill="#fff">26°</text></svg>
<svg class="a" style="left:1403.60px;top:876.60px;" width="11" height="7" viewBox="0 0 11 7" fill="none"><path d="M0.8 5.6L5.3 1.1L9.8 5.6" stroke="#fff" stroke-width="1.3"/></svg>
<div class="t " style="left:1431.00px;top:868.00px;font-size:9.4px;line-height:13px;color:#fff;transform:scaleX(0.9524);transform-origin:left center;-webkit-text-stroke:0.3px #fff;">ENG</div>
<div class="t " style="left:1435.40px;top:882.00px;font-size:9.4px;line-height:13px;color:#fff;transform:scaleX(1.0213);transform-origin:left center;-webkit-text-stroke:0.3px #fff;">IN</div>
<svg class="a" style="left:1465.00px;top:874.60px;" width="15" height="12" viewBox="0 0 15 12" fill="none"><path d="M0.8 4.4Q7.4 -1.6 14 4.4" stroke="#fff" stroke-width="1.1"/><path d="M3 6.8Q7.4 2.6 11.8 6.8" stroke="#fff" stroke-width="1.1"/><path d="M5.2 9Q7.4 7 9.6 9" stroke="#fff" stroke-width="1.1"/><circle cx="7.4" cy="10.6" r="0.9" fill="#fff"/></svg>
<svg class="a" style="left:1485.00px;top:874.60px;" width="15" height="12" viewBox="0 0 15 12" fill="none"><path d="M0.8 4H3.4L6.6 1V11L3.4 8H0.8Z" stroke="#fff" stroke-width="1" stroke-linejoin="round"/><path d="M8.6 4Q10 6 8.6 8M10.4 2.4Q12.8 6 10.4 9.6M12.2 1Q15.6 6 12.2 11" stroke="#fff" stroke-width="1"/></svg>
<svg class="a" style="left:1505.00px;top:874.00px;" width="15" height="13" viewBox="0 0 15 13" fill="none"><rect x="1" y="4" width="11.4" height="7" rx="1.6" stroke="#fff" stroke-width="1.1"/><path d="M13.4 6.2V8.8" stroke="#fff" stroke-width="1.3"/><rect x="2.6" y="5.6" width="5" height="3.8" fill="#fff"/><path d="M3 3.4Q3 1 5.4 1M4 0.2L5.6 1L4.4 2.2" stroke="#fff" stroke-width="0.9"/></svg>
<div class="t " style="right:14.80px;top:868.00px;font-size:9.6px;line-height:13px;color:#fff;transform:scaleX(1.0063);transform-origin:right center;-webkit-text-stroke:0.3px #fff;">01:26:39</div>
<div class="t " style="right:14.80px;top:881.00px;font-size:9.6px;line-height:13px;color:#fff;transform:scaleX(1.0590);transform-origin:right center;-webkit-text-stroke:0.3px #fff;">27-09-2025</div>
</body></html>
